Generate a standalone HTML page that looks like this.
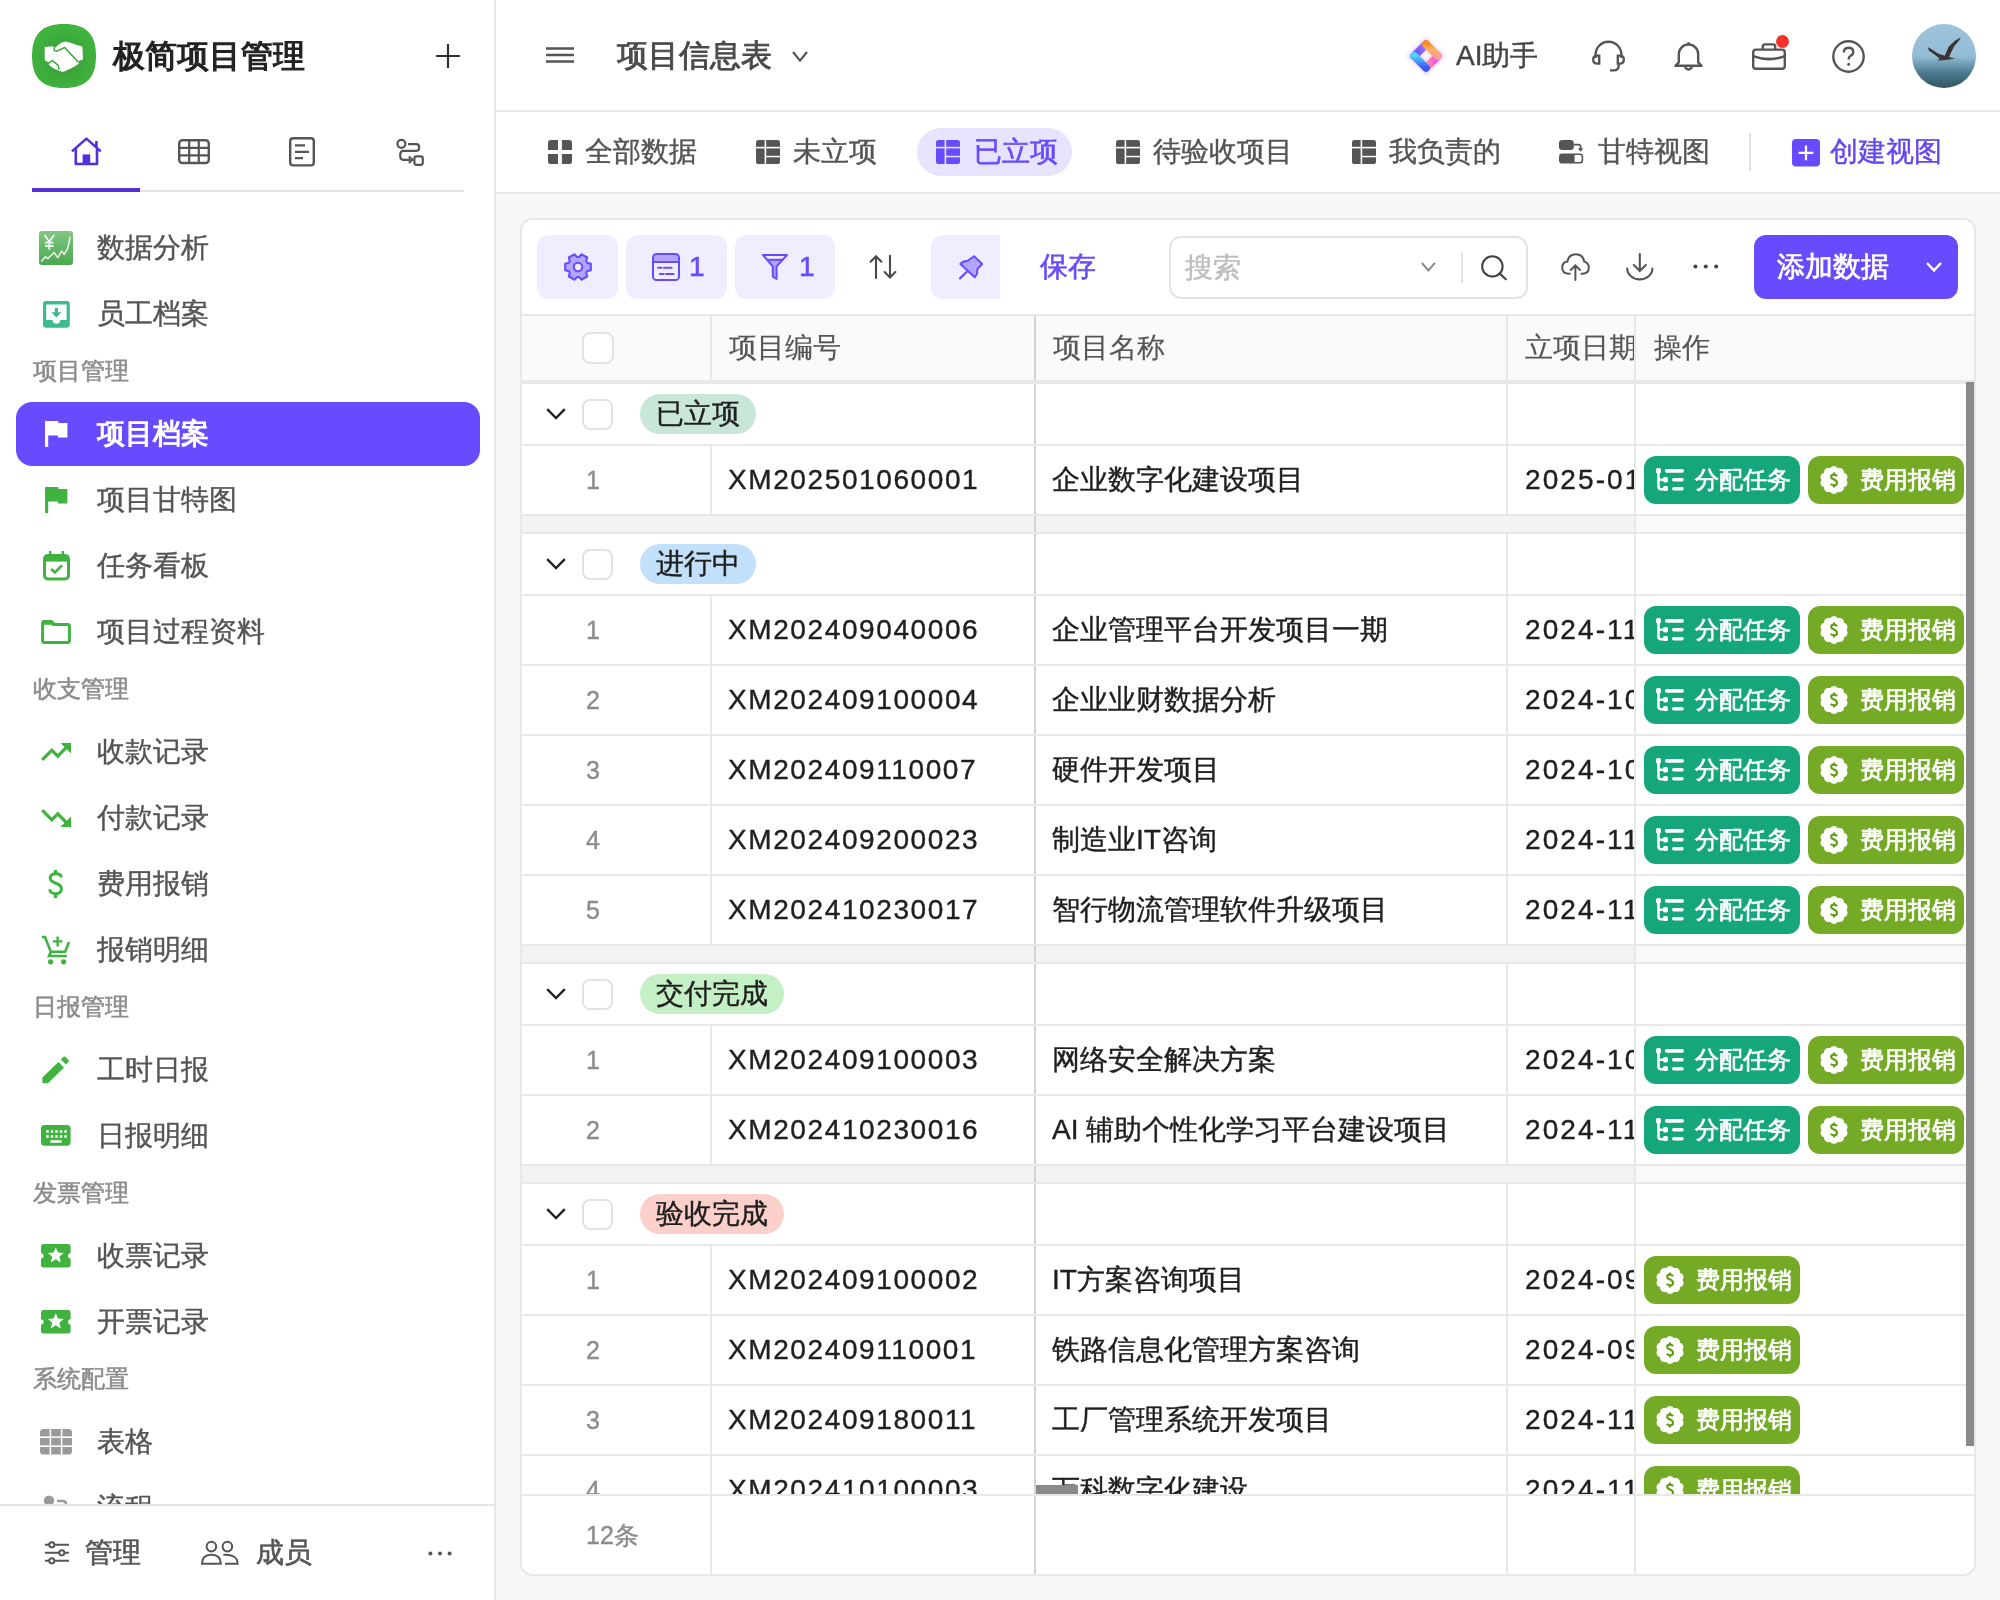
<!DOCTYPE html>
<html><head><meta charset="utf-8"><style>
*{box-sizing:border-box;margin:0;padding:0}
html,body{width:2000px;height:1600px;overflow:hidden;background:#fff}
body{font-family:"Liberation Sans",sans-serif;color:#1f1f1f;-webkit-text-stroke-width:0.2px}
#app{zoom:2;will-change:transform;width:1000px;height:800px;position:relative;overflow:hidden;background:#fff}
svg{display:block;position:absolute;overflow:visible}
.a{position:absolute}
.t{position:absolute;white-space:nowrap}
#side{position:absolute;left:0;top:0;width:248px;height:800px;background:#fff;border-right:1px solid #e8e8e8;overflow:hidden}
.si{position:absolute;left:48.5px;height:33px;line-height:33px;font-size:14px;color:#555;white-space:nowrap}
.sec{position:absolute;left:16.5px;height:20px;line-height:20px;font-size:12px;color:#8c8c8c;-webkit-text-stroke:0.28px #8c8c8c;white-space:nowrap}
#hdr{position:absolute;left:248px;top:0;width:752px;height:56px;border-bottom:1px solid #e8e8e8;background:#fff}
#tabs{position:absolute;left:248px;top:56px;width:752px;height:41px;border-bottom:1px solid #e8e8e8;background:#fff}
#content{position:absolute;left:248px;top:97px;width:752px;height:703px;background:#f7f8fa}
.tab{position:absolute;top:0;height:40px;line-height:40px;font-size:14px;color:#555;white-space:nowrap}
#card{position:absolute;left:260px;top:109px;width:728px;height:679px;background:#fff;border:1px solid #e8e8e8;border-radius:6px;overflow:hidden}
.tb{position:absolute;top:117.5px;height:32px;border-radius:6px;background:#efedff}
.cell{position:absolute;white-space:nowrap;overflow:hidden}
.hl{position:absolute;height:1px;background:#e8e8e8}
.vl{position:absolute;width:1px;background:#e8e8e8}
.code{font-size:14px;color:#1f1f1f;letter-spacing:0.8px}
.nm{font-size:14px;color:#1f1f1f}
.idx{font-size:12.5px;color:#8c8c8c;text-align:center}
.btn{position:absolute;height:24px;border-radius:6px;color:#fff;font-size:12px;line-height:24px;white-space:nowrap}
.tag{position:absolute;height:20px;border-radius:10px;font-size:14px;line-height:20px;color:#1f1f1f;text-align:center;white-space:nowrap}
.cb{position:absolute;width:16px;height:16px;border:1px solid #e2e2e2;border-radius:4px;background:#fff}
</style></head>
<body><div id="app">
<div id="side">
<svg style="left:16px;top:12px;width:32px;height:32px" viewBox="0 0 32 32" >
<defs><radialGradient id="lg" cx="50%" cy="55%" r="50%"><stop offset="0" stop-color="#379c37"/><stop offset="1" stop-color="#40b23e"/></radialGradient></defs>
<path d="M16 0C27 0 32 5 32 16S27 32 16 32 0 27 0 16 5 0 16 0Z" fill="url(#lg)"/>
<path d="M6.3 11.5 10.3 11.1 11.3 12 14.6 9.4 16.6 8.7 19.6 9.5 22.4 10.5 25.2 11.2 25.5 17.7 23.3 18.5 23.4 19.7 21.9 20.9 19.4 22.3 16.4 23.6 15.2 24 13.7 23.4 11.4 22.5 9.4 21.3 8.3 20.1 8.6 19.2 6.4 18.2Z" fill="#fff"/>
<g stroke="#3aa63a" stroke-width="0.75" fill="none" stroke-linecap="round">
<path d="M11.3 12.1Q10.5 13.5 12.2 13.6 14.5 12.8 16.3 11.7L22.9 18.8"/>
<path d="M8.7 19.4 10.2 18.2 13.1 20.7 13.5 22.6"/>
</g>
</svg>
<div class="t" style="left:56.5px;top:12px;height:32px;line-height:32px;font-size:16px;color:#222;-webkit-text-stroke:0.6px #222">极简项目管理</div>
<svg style="left:218px;top:22px;width:12px;height:12px" viewBox="0 0 12 12" ><path d="M6 0V12M0 6H12" stroke="#333" stroke-width="1.1"/></svg>
<svg style="left:34.75px;top:68.7px;width:16.4px;height:14.5px" viewBox="0 0 16.4 14.5" ><path d="M1 7.2 8.2 0.8 15.4 7.2M13.2 5.3V2M2.9 5.7V13.5H13.5V5.7" stroke="#5330d8" stroke-width="1.3" fill="none" stroke-linejoin="round"/>
<rect x="6.3" y="8.7" width="3.8" height="5" fill="#5330d8"/></svg>
<svg style="left:89px;top:69.7px;width:16px;height:12.6px" viewBox="0 0 16 12.6" ><rect x="0.6" y="0.6" width="14.8" height="11.4" rx="1.6" stroke="#555" stroke-width="1.2" fill="none"/>
<path d="M0.6 4.4H15.4M0.6 8.2H15.4M5.6 0.6V12M10.4 0.6V12" stroke="#555" stroke-width="1.1"/></svg>
<svg style="left:144.5px;top:68.4px;width:13px;height:14.8px" viewBox="0 0 13 14.8" ><rect x="0.6" y="0.6" width="11.8" height="13.6" rx="1.4" stroke="#555" stroke-width="1.2" fill="none"/>
<path d="M3 4.2H8M3 7.4H10M3 10.6H7" stroke="#555" stroke-width="1.1"/></svg>
<svg style="left:198px;top:69px;width:14px;height:14px" viewBox="0 0 14 14" ><circle cx="2.7" cy="2.9" r="2" stroke="#555" stroke-width="1.1" fill="none"/>
<rect x="9.2" y="9.2" width="4.2" height="4.2" rx="1" stroke="#555" stroke-width="1.1" fill="none"/>
<path d="M6 3.1H10.3C12 3.1 12 6.4 10.3 6.4H3.6C1.6 6.4 1.6 10.9 3.6 10.9H7.2" stroke="#555" stroke-width="1.1" fill="none"/>
<path d="M6.4 9.3 8.2 10.9 6.4 12.5" stroke="#555" stroke-width="1.1" fill="none"/></svg>
<div class="a" style="left:16px;top:94px;width:54px;height:2px;background:#5330d8"></div>
<div class="a" style="left:70px;top:95px;width:162px;height:1px;background:#e6e6e6"></div>
<svg style="left:19.5px;top:115.5px;width:17px;height:17px" viewBox="0 0 17 17" ><defs><linearGradient id="cg" x1="0" y1="0" x2="0" y2="1"><stop offset="0" stop-color="#80c783"/><stop offset="1" stop-color="#4aa84e"/></linearGradient></defs>
<rect x="0" y="0" width="17" height="17" rx="1.5" fill="url(#cg)"/>
<path d="M2.7 1.9 5.15 5.4 7.6 1.9M5.15 5.4V9.4M3 5.8H7.3M3 7.5H7.3" stroke="#f4f1f1" stroke-width="0.9" fill="none"/>
<path d="M1.1 15.2 3.2 12.9 4.5 13.8 7.5 10.7 9.4 13.3 11.3 10 12.6 11.7 14.3 8.8 15.6 2.8" stroke="#f4f1f1" stroke-width="0.75" fill="none" stroke-linejoin="round"/></svg>
<div class="si" style="top:107.5px;">数据分析</div>
<svg style="left:21.3px;top:150.3px;width:13.4px;height:13.4px" viewBox="0 0 13.4 13.4" ><rect x="0" y="0" width="13.4" height="13.4" rx="1.6" fill="#3dbb8f"/>
<path d="M1.6 1.7H11.8V9.5H8.6A1.9 1.9 0 0 1 4.8 9.5H1.6Z" fill="#fff"/>
<path d="M5.9 3.5H7.5V5.6H9.2L6.7 8.2 4.2 5.6H5.9Z" fill="#3dbb8f"/></svg>
<div class="si" style="top:140.5px;">员工档案</div>
<div class="sec" style="top:175.5px">项目管理</div>
<div class="a" style="left:8px;top:201px;width:232px;height:32px;border-radius:8px;background:#684bff"></div>
<svg style="left:22.4px;top:210.4px;width:11.2px;height:13px" viewBox="0 0 11.2 13" ><path d="M0 0H6.7V1H11.2V8.2H6.5V7.2H1.6V13H0Z" fill="#fff"/></svg>
<div class="si" style="top:200.5px;color:#fff;-webkit-text-stroke:0.55px #fff">项目档案</div>
<svg style="left:22.4px;top:243.4px;width:11.2px;height:13px" viewBox="0 0 11.2 13" ><path d="M0 0H6.7V1H11.2V8.2H6.5V7.2H1.6V13H0Z" fill="#3fb23f"/></svg>
<div class="si" style="top:233.5px;">项目甘特图</div>
<svg style="left:21.25px;top:275.5px;width:13.5px;height:14.8px" viewBox="0 0 13.5 14.8" ><rect x="0.75" y="2.3" width="12" height="11.7" rx="1.6" stroke="#3fb23f" stroke-width="1.5" fill="none"/>
<rect x="0.75" y="2.3" width="12" height="3" fill="#3fb23f"/>
<path d="M3.6 0V2.5M9.9 0V2.5" stroke="#3fb23f" stroke-width="1.2"/>
<path d="M4.1 9 5.9 10.7 9.5 7.2" stroke="#3fb23f" stroke-width="1.3" fill="none"/></svg>
<div class="si" style="top:266.5px;">任务看板</div>
<svg style="left:20.5px;top:310px;width:15px;height:12px" viewBox="0 0 15 12" ><path d="M0.8 10.6V1.6Q0.8 0.8 1.6 0.8H5.2L6.6 2.2H13.4Q14.2 2.2 14.2 3V10.4Q14.2 11.2 13.4 11.2H1.6Q0.8 11.2 0.8 10.4Z" stroke="#3fb23f" stroke-width="1.5" fill="none"/>
<path d="M0.8 1.6H5.5L6.6 2.6" stroke="#3fb23f" stroke-width="1.5" fill="none"/></svg>
<div class="si" style="top:299.5px;">项目过程资料</div>
<div class="sec" style="top:334.5px">收支管理</div>
<svg style="left:20.6px;top:371.4px;width:15px;height:9px" viewBox="0 0 15 9" ><path d="M0.6 8.4 5.4 3.6 8.4 6.6 12.8 2.1" stroke="#3fb23f" stroke-width="1.6" fill="none"/>
<path d="M9.7 0H15V5.3Z" fill="#3fb23f"/></svg>
<div class="si" style="top:359.5px;">收款记录</div>
<svg style="left:20.6px;top:404.7px;width:15px;height:9px" viewBox="0 0 15 9" ><path d="M0.6 0.6 5.4 5.4 8.4 2.4 12.8 6.9" stroke="#3fb23f" stroke-width="1.6" fill="none"/>
<path d="M9.7 9H15V3.7Z" fill="#3fb23f"/></svg>
<div class="si" style="top:392.5px;">付款记录</div>
<svg style="left:24.2px;top:435px;width:7.6px;height:14px" viewBox="0 0 7.6 14" ><path d="M6.6 3.7C6.6 2.4 5.3 1.9 3.9 1.9 2.4 1.9 1.1 2.6 1.1 4 1.1 7.2 6.7 5.8 6.7 9.5 6.7 11.1 5.4 11.9 3.8 11.9 2.2 11.9 0.9 11.1 0.9 9.6" stroke="#3fb23f" stroke-width="1.5" fill="none"/>
<path d="M3.8 0V2.2M3.8 11.6V14" stroke="#3fb23f" stroke-width="1.6"/></svg>
<div class="si" style="top:425.5px;">费用报销</div>
<svg style="left:20.9px;top:467.5px;width:14px;height:15px" viewBox="0 0 14 15" ><path d="M0 1H1.5L4.4 8.4H11.6L13.5 3.5" stroke="#3fb23f" stroke-width="1.3" fill="none"/>
<path d="M4.5 8.4 3.5 10.5H12.4" stroke="#3fb23f" stroke-width="1.3" fill="none"/>
<path d="M7.8 0.7V5.8M5.4 3.2H10.2" stroke="#3fb23f" stroke-width="1.2"/>
<circle cx="4.3" cy="13.4" r="1.3" fill="#3fb23f"/><circle cx="10.8" cy="13.4" r="1.3" fill="#3fb23f"/></svg>
<div class="si" style="top:458.5px;">报销明细</div>
<div class="sec" style="top:493.5px">日报管理</div>
<svg style="left:21.2px;top:528.1px;width:13.7px;height:13.8px" viewBox="0 0 13.7 13.8" ><path d="M0.2 10.8 8.2 3 11 5.7 3 13.6H0.2Z" fill="#3fb23f"/>
<path d="M9.4 1.8 10.7 0.5Q11.2 0 11.7 0.5L13.2 2Q13.7 2.5 13.2 3L12 4.3Z" fill="#3fb23f"/></svg>
<div class="si" style="top:518.5px;">工时日报</div>
<svg style="left:20.6px;top:562.7px;width:14.8px;height:10.4px" viewBox="0 0 14.8 10.4" ><rect x="0" y="0" width="14.8" height="10.4" rx="1.8" fill="#3fb23f"/><rect x="2.60" y="2.6" width="1.25" height="1.3" fill="#fff"/><rect x="2.60" y="5.1" width="1.25" height="1.3" fill="#fff"/><rect x="4.86" y="2.6" width="1.25" height="1.3" fill="#fff"/><rect x="4.86" y="5.1" width="1.25" height="1.3" fill="#fff"/><rect x="7.12" y="2.6" width="1.25" height="1.3" fill="#fff"/><rect x="7.12" y="5.1" width="1.25" height="1.3" fill="#fff"/><rect x="9.38" y="2.6" width="1.25" height="1.3" fill="#fff"/><rect x="9.38" y="5.1" width="1.25" height="1.3" fill="#fff"/><rect x="11.64" y="2.6" width="1.25" height="1.3" fill="#fff"/><rect x="11.64" y="5.1" width="1.25" height="1.3" fill="#fff"/><rect x="4.7" y="7.6" width="5.6" height="1.3" fill="#fff"/></svg>
<div class="si" style="top:551.5px;">日报明细</div>
<div class="sec" style="top:586.5px">发票管理</div>
<svg style="left:20.6px;top:622.1px;width:14.8px;height:11.8px" viewBox="0 0 14.8 11.8" ><path d="M1.2 0H13.6Q14.8 0 14.8 1.2V4.6A1.3 1.3 0 0 0 14.8 7.2V10.6Q14.8 11.8 13.6 11.8H1.2Q0 11.8 0 10.6V7.2A1.3 1.3 0 0 0 0 4.6V1.2Q0 0 1.2 0Z" fill="#3fb23f"/>
<path d="M7.4 1.6 8.5 4.3 11.4 4.5 9.2 6.3 9.9 9.2 7.4 7.6 4.9 9.2 5.6 6.3 3.4 4.5 6.3 4.3Z" fill="#fff"/></svg>
<div class="si" style="top:611.5px;">收票记录</div>
<svg style="left:20.6px;top:655.1px;width:14.8px;height:11.8px" viewBox="0 0 14.8 11.8" ><path d="M1.2 0H13.6Q14.8 0 14.8 1.2V4.6A1.3 1.3 0 0 0 14.8 7.2V10.6Q14.8 11.8 13.6 11.8H1.2Q0 11.8 0 10.6V7.2A1.3 1.3 0 0 0 0 4.6V1.2Q0 0 1.2 0Z" fill="#3fb23f"/>
<path d="M7.4 1.6 8.5 4.3 11.4 4.5 9.2 6.3 9.9 9.2 7.4 7.6 4.9 9.2 5.6 6.3 3.4 4.5 6.3 4.3Z" fill="#fff"/></svg>
<div class="si" style="top:644.5px;">开票记录</div>
<div class="sec" style="top:679.5px">系统配置</div>
<svg style="left:20px;top:714.6px;width:16px;height:12.8px" viewBox="0 0 16 12.8" ><rect x="0" y="0" width="16" height="12.8" rx="1.8" fill="#9a9a9a"/><rect x="4.8" y="-1" width="0.8" height="15" fill="#fff"/><rect x="10.4" y="-1" width="0.8" height="15" fill="#fff"/><rect x="-1" y="3.7" width="18" height="0.8" fill="#fff"/><rect x="-1" y="8.2" width="18" height="0.8" fill="#fff"/></svg>
<div class="si" style="top:704.5px;">表格</div>
<svg style="left:21px;top:747px;width:14px;height:14px" viewBox="0 0 14 14" ><circle cx="3.5" cy="3.3" r="2.6" fill="#9a9a9a"/><path d="M7.5 3.5H10.5Q12 3.5 12 5V6" stroke="#9a9a9a" stroke-width="1.2" fill="none"/></svg>
<div class="si" style="top:737.5px;">流程</div>
<div class="a" style="left:0;top:752px;width:247px;height:48px;background:#fff;border-top:1px solid #e6e6e6"></div>
<svg style="left:22.3px;top:770.5px;width:12px;height:11.8px" viewBox="0 0 12 11.8" ><g stroke="#555" stroke-width="1" fill="none">
<path d="M0 1.9H12M0 5.9H12M0 9.9H12"/>
<circle cx="3.4" cy="1.9" r="1.3" fill="#fff"/><circle cx="8.4" cy="5.9" r="1.3" fill="#fff"/><circle cx="3.4" cy="9.9" r="1.3" fill="#fff"/></g></svg>
<div class="t" style="left:42.5px;top:760px;height:33px;line-height:33px;font-size:14px;color:#555;-webkit-text-stroke:0.3px #555">管理</div>
<svg style="left:100.4px;top:770.5px;width:19px;height:11.8px" viewBox="0 0 19 11.8" ><g stroke="#555" stroke-width="1" fill="none">
<circle cx="5.2" cy="2.8" r="2.4"/><path d="M0.5 11.4Q0.5 6.9 5.2 6.9 9.9 6.9 9.9 11.4Z"/>
<circle cx="13.2" cy="2.8" r="2.4"/><path d="M11.2 6.9Q18.3 6.6 18.3 11.4H12"/></g></svg>
<div class="t" style="left:128px;top:760px;height:33px;line-height:33px;font-size:14px;color:#555;-webkit-text-stroke:0.3px #555">成员</div>
<svg style="left:214px;top:775.5px;width:12px;height:3px" viewBox="0 0 12 3" ><circle cx="1.2" cy="1.3" r="1" fill="#555"/><circle cx="6" cy="1.3" r="1" fill="#555"/><circle cx="10.8" cy="1.3" r="1" fill="#555"/></svg>
</div>
<div id="hdr"></div>
<svg style="left:273px;top:23.7px;width:14px;height:8px" viewBox="0 0 14 8" ><path d="M0 0.8H14M0 4.05H14M0 7.2H14" stroke="#555" stroke-width="1.25"/></svg>
<div class="t" style="left:308.5px;top:12px;height:32px;line-height:32px;font-size:15.6px;color:#4a4a4a;-webkit-text-stroke:0.45px #4a4a4a">项目信息表</div>
<svg style="left:396px;top:25.5px;width:8px;height:5.7px" viewBox="0 0 8 5.7" ><path d="M0.5 0.5 4 4.8 7.5 0.5" stroke="#555" stroke-width="1.1" fill="none"/></svg>
<svg style="left:704.5px;top:19.5px;width:17px;height:17px" viewBox="0 0 17 17" ><defs>
<linearGradient id="g1" x1="0" y1="1" x2="1" y2="0"><stop offset="0" stop-color="#5b4dff"/><stop offset="1" stop-color="#a678ff"/></linearGradient>
<linearGradient id="g2" x1="0" y1="0" x2="0" y2="1"><stop offset="0" stop-color="#ff8a1a"/><stop offset="0.4" stop-color="#ffb35a"/><stop offset="1" stop-color="#ffa08e"/></linearGradient>
<linearGradient id="g3" x1="1" y1="0" x2="0" y2="0"><stop offset="0" stop-color="#f540f0"/><stop offset="1" stop-color="#ff9e95"/></linearGradient>
<linearGradient id="g4" x1="0" y1="0" x2="0" y2="1"><stop offset="0" stop-color="#52d2f5"/><stop offset="1" stop-color="#3556ff"/></linearGradient>
<filter id="bl" x="-50%" y="-50%" width="200%" height="200%"><feGaussianBlur stdDeviation="0.9"/></filter>
</defs>
<g fill="none" stroke-width="3.9" stroke-linecap="round">
<path d="M8.5 8.5m-6 0l6-6 6 6-6 6Z" stroke="#d9c0ff" stroke-width="5.5" opacity="0.55" filter="url(#bl)"/>
<path d="M2.6 8.5 8.5 2.6" stroke="url(#g1)"/>
<path d="M14.4 8.5 8.5 14.4" stroke="url(#g3)"/>
<path d="M8.5 2.6 14.4 8.5" stroke="url(#g2)"/>
<path d="M8.5 14.4 2.6 8.5" stroke="url(#g4)"/>
</g></svg>
<div class="t" style="left:728px;top:12px;height:32px;line-height:32px;font-size:14px;color:#444">AI助手</div>
<svg style="left:796px;top:20px;width:16.5px;height:16px" viewBox="0 0 16.5 16" ><g stroke="#555" stroke-width="1.2" fill="none">
<path d="M1.8 9V7.3A6.45 6.45 0 0 1 14.7 7.3V9"/>
<path d="M3.6 7.8H2.6Q0.6 7.8 0.6 9.7 0.6 11.8 2.6 11.8H3.6Z"/>
<path d="M12.9 7.8H13.9Q15.9 7.8 15.9 9.7 15.9 11.8 13.9 11.8H12.9Z"/>
<path d="M13.4 11.8V12.6Q13.4 15.2 10.8 15.2H9"/></g></svg>
<svg style="left:837px;top:20.7px;width:14.5px;height:14.6px" viewBox="0 0 14.5 14.6" ><g stroke="#555" stroke-width="1.2" fill="none" stroke-linejoin="round">
<path d="M2.4 10.7V6.6A4.85 4.85 0 0 1 12.1 6.6V10.7L13.8 12.4H0.7Z"/>
<path d="M7.25 1.8V0.6"/><path d="M5.6 12.6A1.65 1.65 0 0 0 8.9 12.6"/></g></svg>
<svg style="left:876px;top:21.5px;width:17px;height:13.5px" viewBox="0 0 17 13.5" ><g stroke="#555" stroke-width="1.2" fill="none">
<rect x="0.6" y="3.3" width="15.8" height="9.6" rx="1.4"/>
<path d="M5.4 3.3V1.8Q5.4 0.7 6.5 0.7H10.5Q11.6 0.7 11.6 1.8V3.3"/>
<path d="M0.6 6.6Q8.5 9.6 16.4 6.6"/></g><rect x="7.4" y="7.3" width="2.2" height="1.2" fill="#555"/></svg>
<div class="a" style="left:887.8px;top:17.5px;width:6.6px;height:6.6px;border-radius:50%;background:#f5312a"></div>
<svg style="left:916px;top:20px;width:16.5px;height:16.5px" viewBox="0 0 16.5 16.5" ><circle cx="8.25" cy="8.25" r="7.6" stroke="#555" stroke-width="1.2" fill="none"/>
<path d="M5.9 6.3Q5.9 3.9 8.3 3.9 10.6 3.9 10.6 6 10.6 7.2 9.3 7.9 8.3 8.5 8.3 9.8" stroke="#555" stroke-width="1.2" fill="none"/>
<circle cx="8.3" cy="12.1" r="0.75" fill="#555"/></svg>
<svg style="left:956px;top:12px;width:32px;height:32px" viewBox="0 0 32 32" ><defs><linearGradient id="av" x1="0" y1="0" x2="0" y2="1"><stop offset="0" stop-color="#9fc3db"/><stop offset="0.5" stop-color="#93bdd6"/><stop offset="0.75" stop-color="#4f7d93"/><stop offset="1" stop-color="#2d5462"/></linearGradient></defs>
<circle cx="16" cy="16" r="16" fill="url(#av)"/>
<path d="M8 11.6 8.6 11.9 13.2 14.9 16.4 15.9 18.3 11.4 21.6 8.2 24.3 6.8 23.6 8.2 21.1 11.1 19 15.4 18.6 16.6 21.5 17.3 19.5 17.6 15.8 18.1 12.8 18.3 13.8 17.3 11.2 15.3 8.4 13.2Z" fill="#3b3532"/></svg>
<div id="tabs"></div>
<div class="a" style="left:458.3px;top:64px;width:77.6px;height:24px;border-radius:12px;background:#e8e4ff"></div>
<svg style="left:274px;top:70px;width:12px;height:12px" viewBox="0 0 12 12" ><rect x="0" y="0" width="12" height="12" rx="1.4" fill="#555"/><rect x="5" y="-1" width="1.95" height="14" fill="#fff"/><rect x="-1" y="5" width="14" height="2" fill="#fff"/></svg>
<div class="tab" style="left:292.5px;top:56px">全部数据</div>
<svg style="left:378px;top:70px;width:12px;height:12px" viewBox="0 0 12 12" ><rect x="0" y="0" width="12" height="12" rx="1.3" fill="#555"/><rect x="4.3" y="-1" width="0.8" height="14" fill="#fff"/><rect x="-1" y="3.4" width="14" height="0.8" fill="#fff"/><rect x="5" y="7.9" width="8" height="0.75" fill="#fff"/></svg>
<div class="tab" style="left:396.5px;top:56px">未立项</div>
<svg style="left:468px;top:70px;width:12px;height:12px" viewBox="0 0 12 12" ><rect x="0" y="0" width="12" height="12" rx="1.3" fill="#684bff"/><rect x="4.3" y="-1" width="0.8" height="14" fill="#e8e4ff"/><rect x="-1" y="3.4" width="14" height="0.8" fill="#e8e4ff"/><rect x="5" y="7.9" width="8" height="0.75" fill="#e8e4ff"/></svg>
<div class="tab" style="left:487px;top:56px;color:#684bff;-webkit-text-stroke:0.3px #684bff">已立项</div>
<svg style="left:558px;top:70px;width:12px;height:12px" viewBox="0 0 12 12" ><rect x="0" y="0" width="12" height="12" rx="1.3" fill="#555"/><rect x="4.3" y="-1" width="0.8" height="14" fill="#fff"/><rect x="-1" y="3.4" width="14" height="0.8" fill="#fff"/><rect x="5" y="7.9" width="8" height="0.75" fill="#fff"/></svg>
<div class="tab" style="left:576.5px;top:56px">待验收项目</div>
<svg style="left:676px;top:70px;width:12px;height:12px" viewBox="0 0 12 12" ><rect x="0" y="0" width="12" height="12" rx="1.3" fill="#555"/><rect x="4.3" y="-1" width="0.8" height="14" fill="#fff"/><rect x="-1" y="3.4" width="14" height="0.8" fill="#fff"/><rect x="5" y="7.9" width="8" height="0.75" fill="#fff"/></svg>
<div class="tab" style="left:694.5px;top:56px">我负责的</div>
<svg style="left:779.6px;top:70px;width:12.5px;height:12px" viewBox="0 0 12.5 12" ><rect x="0" y="0" width="7.4" height="5" rx="1.6" fill="#555"/>
<path d="M7.4 2.3H9.8Q10.8 2.3 10.8 3.3V4.5" stroke="#555" stroke-width="0.8" fill="none"/><path d="M9.9 4.1 10.8 5.2 11.7 4.1" stroke="#555" stroke-width="0.8" fill="none"/>
<path d="M1.6 6.7H10.4Q12.1 6.7 12.1 8.4V10.1Q12.1 11.8 10.4 11.8H1.6Q0 11.8 0 10.1V8.4Q0 6.7 1.6 6.7Z" fill="#555"/>
<path d="M7.8 7.5H10.4Q11.3 7.5 11.3 8.4V10.1Q11.3 11 10.4 11H7.8Z" fill="#fff"/></svg>
<div class="tab" style="left:799px;top:56px">甘特视图</div>
<div class="a" style="left:874.5px;top:66.5px;width:1px;height:19px;background:#e3e3e3"></div>
<svg style="left:896px;top:69.4px;width:14px;height:13.8px" viewBox="0 0 14 13.8" ><rect x="0" y="0" width="14" height="13.8" rx="2" fill="#684bff"/><path d="M7 3.2V10.6M3.3 6.9H10.7" stroke="#fff" stroke-width="1.1"/></svg>
<div class="tab" style="left:915px;top:56px;color:#6446f0">创建视图</div>
<div id="content"></div>
<div id="card"></div>
<div class="tb" style="left:268.7px;width:40.3px"></div>
<svg style="left:282px;top:126.5px;width:14px;height:14px" viewBox="0 0 14 14" ><path d="M7.42 2.02 8.83 0.66 11.57 2.24 11.11 4.15 11.52 4.87 13.41 5.42 13.41 8.58 11.52 9.13 11.11 9.85 11.57 11.76 8.83 13.34 7.42 11.98 6.58 11.98 5.17 13.34 2.43 11.76 2.89 9.85 2.48 9.13 0.59 8.58 0.59 5.42 2.48 4.87 2.89 4.15 2.43 2.24 5.17 0.66 6.58 2.02Z" fill="#b3a5ff" stroke="#684bff" stroke-width="1.05" stroke-linejoin="round"/>
<circle cx="7" cy="7" r="2.1" fill="#f1efff" stroke="#684bff" stroke-width="1.05"/></svg>
<div class="tb" style="left:313px;width:50.4px"></div>
<svg style="left:326px;top:126.5px;width:14px;height:14px" viewBox="0 0 14 14" ><path d="M0.5 4.5V2.3Q0.5 0.5 2.3 0.5H11.7Q13.5 0.5 13.5 2.3V4.5Z" fill="#b3a5ff"/>
<rect x="0.5" y="0.5" width="13" height="13" rx="1.8" stroke="#684bff" stroke-width="1" fill="none"/>
<path d="M0.5 4.5H13.5" stroke="#684bff" stroke-width="1"/><path d="M3 7.4H4.8M6 7.4H9.8M3.9 10.5H5.8M7 10.5H10.8" stroke="#684bff" stroke-width="1" stroke-linecap="round"/></svg>
<div class="t" style="left:344.5px;top:117.5px;height:32px;line-height:32px;font-size:14px;color:#684bff;-webkit-text-stroke:0.3px #684bff">1</div>
<div class="tb" style="left:367.5px;width:50px"></div>
<svg style="left:381px;top:127px;width:13px;height:13px" viewBox="0 0 13 13" ><path d="M2.6 2.9H10.4L7.3 6.2V12.4L5.4 11.1V6.2Z" fill="#b3a5ff"/>
<path d="M0.5 0.5H12.5L7.3 6.2V12.5L5.4 11.3V6.2Z" stroke="#684bff" stroke-width="1" fill="none" stroke-linejoin="round"/>
<path d="M2.7 2.9H10.3" stroke="#684bff" stroke-width="1"/></svg>
<div class="t" style="left:399.5px;top:117.5px;height:32px;line-height:32px;font-size:14px;color:#684bff;-webkit-text-stroke:0.3px #684bff">1</div>
<svg style="left:435px;top:127.5px;width:13px;height:11.8px" viewBox="0 0 13 11.8" ><path d="M3 11.5V0.6M0.3 3.4 3 0.6 5.7 3.4M10 0.4V11.2M7.3 8.5 10 11.2 12.7 8.5" stroke="#4a4a4a" stroke-width="1.05" fill="none" stroke-linecap="round"/></svg>
<div class="tb" style="left:465.6px;width:34.4px;border-radius:6px 0 0 6px"></div>
<svg style="left:479px;top:126.8px;width:13.2px;height:13.4px" viewBox="0 0 13.2 13.4" ><path d="M8.05 1.1 12.1 5 9.8 7.4Q9.4 8.6 9.6 9.8L8.4 11.6 1.2 4.95Q2.6 3.4 4.7 3.5Z" fill="#b3a5ff" stroke="#684bff" stroke-width="1" stroke-linejoin="round"/>
<path d="M4.4 8.9 1 12.2" stroke="#684bff" stroke-width="1.1" stroke-linecap="round"/></svg>
<div class="t" style="left:520px;top:117.5px;height:32px;line-height:32px;font-size:14px;color:#684bff;-webkit-text-stroke:0.3px #684bff">保存</div>
<div class="a" style="left:584.5px;top:118px;width:179.5px;height:31.5px;border:1px solid #e4e4e4;border-radius:6px;background:#fff"></div>
<div class="t" style="left:592.5px;top:118px;height:31.5px;line-height:31.5px;font-size:14px;color:#bdbdbd">搜索</div>
<svg style="left:710.6px;top:131px;width:7.4px;height:4.8px" viewBox="0 0 7.4 4.8" ><path d="M0.4 0.4 3.7 4.2 7 0.4" stroke="#888" stroke-width="1" fill="none"/></svg>
<div class="a" style="left:730.5px;top:125.8px;width:1px;height:15.5px;background:#e4e4e4"></div>
<svg style="left:740.7px;top:127.3px;width:12.8px;height:12.4px" viewBox="0 0 12.8 12.4" ><circle cx="5.7" cy="5.7" r="5.1" stroke="#444" stroke-width="1.05" fill="none"/><path d="M9.4 9.3 12.4 12.1" stroke="#444" stroke-width="1.1" stroke-linecap="round"/></svg>
<svg style="left:780.7px;top:126.5px;width:14.4px;height:13.6px" viewBox="0 0 14.4 13.6" ><g stroke="#555" stroke-width="1" fill="none" stroke-linecap="round">
<path d="M4.4 10.4H3.6Q0.6 10.2 0.6 7.3 0.7 4.6 3.2 4.3 3.9 0.6 7.4 0.6 11 0.6 11.6 4.3 13.9 4.8 13.9 7.4 13.8 10.2 11 10.4H10.2"/>
<path d="M7.2 13.5V6.3M4.9 8.5 7.2 6.2 9.5 8.5"/></g></svg>
<svg style="left:813px;top:126.5px;width:13.8px;height:13.6px" viewBox="0 0 13.8 13.6" ><g stroke="#555" stroke-width="1.05" fill="none" stroke-linecap="round">
<path d="M6.9 0.5V9M3.9 6 6.9 9 9.9 6"/><path d="M0.6 7.8A6.3 5.4 0 0 0 13.2 7.8"/></g></svg>
<svg style="left:846.6px;top:131.8px;width:12.8px;height:2.6px" viewBox="0 0 12.8 2.6" ><circle cx="1.2" cy="1.3" r="1" fill="#444"/><circle cx="6.4" cy="1.3" r="1" fill="#444"/><circle cx="11.6" cy="1.3" r="1" fill="#444"/></svg>
<div class="a" style="left:877px;top:117.3px;width:102px;height:32px;border-radius:6px;background:#684bff"></div>
<div class="t" style="left:888.5px;top:117.3px;height:32px;line-height:32px;font-size:14px;color:#fff;-webkit-text-stroke:0.35px #fff">添加数据</div>
<svg style="left:962.8px;top:131px;width:8px;height:4.8px" viewBox="0 0 8 4.8" ><path d="M0.5 0.5 4 4.2 7.5 0.5" stroke="#fff" stroke-width="1.2" fill="none"/></svg>
<div class="a" style="left:261px;top:157px;width:726px;height:33px;background:#fafafa;border-top:1px solid #e8e8e8"></div>
<div class="a" style="left:261px;top:190px;width:726px;height:2px;background:#e8e8e8"></div>
<div class="vl" style="left:355px;top:158px;height:32px;background:#e8e8e8"></div>
<div class="vl" style="left:517px;top:158px;height:32px;background:#d3d3d3"></div>
<div class="vl" style="left:753px;top:158px;height:32px;background:#e8e8e8"></div>
<div class="vl" style="left:817px;top:158px;height:32px;background:#e8e8e8"></div>
<div class="cb" style="left:291px;top:166px"></div>
<div class="t" style="left:364.5px;top:158px;height:32px;line-height:32px;font-size:14px;color:#555;-webkit-text-stroke-width:0.08px">项目编号</div>
<div class="t" style="left:526.5px;top:158px;height:32px;line-height:32px;font-size:14px;color:#555;-webkit-text-stroke-width:0.08px">项目名称</div>
<div class="t" style="left:826.8px;top:158px;height:32px;line-height:32px;font-size:14px;color:#555;-webkit-text-stroke-width:0.08px">操作</div>
<div class="a" style="left:753px;top:158px;width:64px;height:32px;overflow:hidden"><div class="t" style="left:9.4px;top:0;height:32px;line-height:32px;font-size:14px;color:#555;-webkit-text-stroke-width:0.08px">立项日期</div></div>
<div class="a" style="left:261px;top:192px;width:726px;height:555px;overflow:hidden">
<div class="a" style="left:-261px;top:-192px;width:1000px;height:800px">
<svg style="left:273px;top:204px;width:10px;height:6px" viewBox="0 0 10 6"><path d="M0.6 0.6 5 5 9.4 0.6" stroke="#222" stroke-width="1.2" fill="none"/></svg>
<div class="cb" style="left:291px;top:199.3px;width:15.5px;height:15.5px"></div>
<div class="tag" style="left:320px;top:197px;width:58px;background:#c9e7d9">已立项</div>
<div class="vl" style="left:517px;top:192px;height:30px;background:#d3d3d3"></div>
<div class="vl" style="left:753px;top:192px;height:30px;background:#e8e8e8"></div>
<div class="vl" style="left:817px;top:192px;height:30px;background:#e8e8e8"></div>
<div class="hl" style="left:261px;top:222px;width:726px"></div>
<div class="cell idx" style="left:293px;top:223px;width:10px;height:34px;line-height:34px;text-align:left">1</div>
<div class="cell code" style="left:364px;top:223px;height:34px;line-height:34px">XM202501060001</div>
<div class="cell nm" style="left:526px;top:223px;height:34px;line-height:34px">企业数字化建设项目</div>
<div class="cell code" style="left:754px;top:223px;width:63px;height:34px;line-height:34px;padding-left:8.5px;letter-spacing:1.05px">2025-01</div>
<div class="btn" style="left:822px;top:228px;width:78px;background:#16a67b"></div>
<svg style="left:828px;top:234.15px;width:14px;height:11.5px" viewBox="0 0 14 11.5"><g fill="#fff"><rect x="0" y="0" width="2.5" height="2.7" rx="0.8"/><rect x="3.5" y="4.5" width="2.5" height="2.7" rx="0.8"/><rect x="3.5" y="9" width="2.5" height="2.5" rx="0.8"/><rect x="4.4" y="0.55" width="9.6" height="1.8" rx="0.9"/><rect x="8" y="4.95" width="5.9" height="1.8" rx="0.9"/><rect x="8" y="9.45" width="5.9" height="1.8" rx="0.9"/></g><path d="M1.25 2.4V9.4Q1.25 10.6 2.45 10.6H3.8M1.25 5.85H3.8" stroke="#fff" stroke-width="1.3" fill="none"/></svg>
<div class="t" style="left:847.7px;top:228px;height:24px;line-height:24px;font-size:11.8px;color:#fff;-webkit-text-stroke:0.35px #fff">分配任务</div>
<div class="btn" style="left:904px;top:228px;width:78px;background:#74aa25"></div>
<svg style="left:910px;top:233px;width:14px;height:14px" viewBox="0 0 14 14"><path d="M7.00 0.05 7.27 0.07 7.54 0.11 7.81 0.19 8.06 0.30 8.30 0.45 8.53 0.63 8.73 0.85 8.87 1.25 9.21 1.01 9.51 0.94 9.80 0.93 10.08 0.96 10.35 1.02 10.61 1.11 10.86 1.23 11.09 1.38 11.30 1.55 11.49 1.75 11.65 1.97 11.79 2.21 11.91 2.46 11.99 2.74 12.02 3.05 11.89 3.44 12.31 3.45 12.59 3.57 12.83 3.73 13.04 3.92 13.23 4.13 13.38 4.36 13.51 4.60 13.61 4.85 13.68 5.12 13.72 5.39 13.72 5.66 13.70 5.94 13.64 6.21 13.54 6.49 13.38 6.75 13.05 7.00 13.38 7.25 13.54 7.51 13.64 7.79 13.70 8.06 13.72 8.34 13.72 8.61 13.68 8.88 13.61 9.15 13.51 9.40 13.38 9.64 13.23 9.87 13.04 10.08 12.83 10.27 12.59 10.43 12.31 10.55 11.89 10.56 12.02 10.95 11.99 11.26 11.91 11.54 11.79 11.79 11.65 12.03 11.49 12.25 11.30 12.45 11.09 12.62 10.86 12.77 10.61 12.89 10.35 12.98 10.08 13.04 9.80 13.07 9.51 13.06 9.21 12.99 8.87 12.75 8.73 13.15 8.53 13.37 8.30 13.55 8.06 13.70 7.81 13.81 7.54 13.89 7.27 13.93 7.00 13.95 6.73 13.93 6.46 13.89 6.19 13.81 5.94 13.70 5.70 13.55 5.47 13.37 5.27 13.15 5.13 12.75 4.79 12.99 4.49 13.06 4.20 13.07 3.92 13.04 3.65 12.98 3.39 12.89 3.14 12.77 2.91 12.62 2.70 12.45 2.51 12.25 2.35 12.03 2.21 11.79 2.09 11.54 2.01 11.26 1.98 10.95 2.11 10.56 1.69 10.55 1.41 10.43 1.17 10.27 0.96 10.08 0.77 9.87 0.62 9.64 0.49 9.40 0.39 9.15 0.32 8.88 0.28 8.61 0.28 8.34 0.30 8.06 0.36 7.79 0.46 7.51 0.62 7.25 0.95 7.00 0.62 6.75 0.46 6.49 0.36 6.21 0.30 5.94 0.28 5.66 0.28 5.39 0.32 5.12 0.39 4.85 0.49 4.60 0.62 4.36 0.77 4.13 0.96 3.92 1.17 3.73 1.41 3.57 1.69 3.45 2.11 3.44 1.98 3.05 2.01 2.74 2.09 2.46 2.21 2.21 2.35 1.97 2.51 1.75 2.70 1.55 2.91 1.38 3.14 1.23 3.39 1.11 3.65 1.02 3.92 0.96 4.20 0.93 4.49 0.94 4.79 1.01 5.13 1.25 5.27 0.85 5.47 0.63 5.70 0.45 5.94 0.30 6.19 0.19 6.46 0.11 6.73 0.07Z" fill="#fff"/><path d="M8.5 5.1Q8 4.3 7 4.3 5.6 4.3 5.6 5.4 5.6 6.3 7 6.8 8.5 7.3 8.5 8.5 8.5 9.7 7 9.7 5.9 9.7 5.4 8.9M7 3.3V4.3M7 9.7V10.7" stroke="#5f9e12" stroke-width="1.05" fill="none"/></svg>
<div class="t" style="left:930px;top:228px;height:24px;line-height:24px;font-size:11.8px;color:#fff;-webkit-text-stroke:0.35px #fff">费用报销</div>
<div class="vl" style="left:355px;top:223px;height:34px"></div>
<div class="vl" style="left:517px;top:223px;height:34px;background:#d3d3d3"></div>
<div class="vl" style="left:753px;top:223px;height:34px;background:#e8e8e8"></div>
<div class="vl" style="left:817px;top:223px;height:34px;background:#e8e8e8"></div>
<div class="hl" style="left:261px;top:257px;width:726px"></div>
<div class="a" style="left:261px;top:258px;width:556px;height:8px;background:#f3f3f3"></div>
<div class="a" style="left:817px;top:258px;width:170px;height:8px;background:#f9f9f9"></div>
<div class="vl" style="left:517px;top:258px;height:8px;background:#d3d3d3"></div>
<div class="vl" style="left:817px;top:258px;height:8px"></div>
<div class="hl" style="left:261px;top:266px;width:726px"></div>
<svg style="left:273px;top:279px;width:10px;height:6px" viewBox="0 0 10 6"><path d="M0.6 0.6 5 5 9.4 0.6" stroke="#222" stroke-width="1.2" fill="none"/></svg>
<div class="cb" style="left:291px;top:274.3px;width:15.5px;height:15.5px"></div>
<div class="tag" style="left:320px;top:272px;width:58px;background:#c3e0fb">进行中</div>
<div class="vl" style="left:517px;top:267px;height:30px;background:#d3d3d3"></div>
<div class="vl" style="left:753px;top:267px;height:30px;background:#e8e8e8"></div>
<div class="vl" style="left:817px;top:267px;height:30px;background:#e8e8e8"></div>
<div class="hl" style="left:261px;top:297px;width:726px"></div>
<div class="cell idx" style="left:293px;top:298px;width:10px;height:34px;line-height:34px;text-align:left">1</div>
<div class="cell code" style="left:364px;top:298px;height:34px;line-height:34px">XM202409040006</div>
<div class="cell nm" style="left:526px;top:298px;height:34px;line-height:34px">企业管理平台开发项目一期</div>
<div class="cell code" style="left:754px;top:298px;width:63px;height:34px;line-height:34px;padding-left:8.5px;letter-spacing:1.05px">2024-11</div>
<div class="btn" style="left:822px;top:303px;width:78px;background:#16a67b"></div>
<svg style="left:828px;top:309.15px;width:14px;height:11.5px" viewBox="0 0 14 11.5"><g fill="#fff"><rect x="0" y="0" width="2.5" height="2.7" rx="0.8"/><rect x="3.5" y="4.5" width="2.5" height="2.7" rx="0.8"/><rect x="3.5" y="9" width="2.5" height="2.5" rx="0.8"/><rect x="4.4" y="0.55" width="9.6" height="1.8" rx="0.9"/><rect x="8" y="4.95" width="5.9" height="1.8" rx="0.9"/><rect x="8" y="9.45" width="5.9" height="1.8" rx="0.9"/></g><path d="M1.25 2.4V9.4Q1.25 10.6 2.45 10.6H3.8M1.25 5.85H3.8" stroke="#fff" stroke-width="1.3" fill="none"/></svg>
<div class="t" style="left:847.7px;top:303px;height:24px;line-height:24px;font-size:11.8px;color:#fff;-webkit-text-stroke:0.35px #fff">分配任务</div>
<div class="btn" style="left:904px;top:303px;width:78px;background:#74aa25"></div>
<svg style="left:910px;top:308px;width:14px;height:14px" viewBox="0 0 14 14"><path d="M7.00 0.05 7.27 0.07 7.54 0.11 7.81 0.19 8.06 0.30 8.30 0.45 8.53 0.63 8.73 0.85 8.87 1.25 9.21 1.01 9.51 0.94 9.80 0.93 10.08 0.96 10.35 1.02 10.61 1.11 10.86 1.23 11.09 1.38 11.30 1.55 11.49 1.75 11.65 1.97 11.79 2.21 11.91 2.46 11.99 2.74 12.02 3.05 11.89 3.44 12.31 3.45 12.59 3.57 12.83 3.73 13.04 3.92 13.23 4.13 13.38 4.36 13.51 4.60 13.61 4.85 13.68 5.12 13.72 5.39 13.72 5.66 13.70 5.94 13.64 6.21 13.54 6.49 13.38 6.75 13.05 7.00 13.38 7.25 13.54 7.51 13.64 7.79 13.70 8.06 13.72 8.34 13.72 8.61 13.68 8.88 13.61 9.15 13.51 9.40 13.38 9.64 13.23 9.87 13.04 10.08 12.83 10.27 12.59 10.43 12.31 10.55 11.89 10.56 12.02 10.95 11.99 11.26 11.91 11.54 11.79 11.79 11.65 12.03 11.49 12.25 11.30 12.45 11.09 12.62 10.86 12.77 10.61 12.89 10.35 12.98 10.08 13.04 9.80 13.07 9.51 13.06 9.21 12.99 8.87 12.75 8.73 13.15 8.53 13.37 8.30 13.55 8.06 13.70 7.81 13.81 7.54 13.89 7.27 13.93 7.00 13.95 6.73 13.93 6.46 13.89 6.19 13.81 5.94 13.70 5.70 13.55 5.47 13.37 5.27 13.15 5.13 12.75 4.79 12.99 4.49 13.06 4.20 13.07 3.92 13.04 3.65 12.98 3.39 12.89 3.14 12.77 2.91 12.62 2.70 12.45 2.51 12.25 2.35 12.03 2.21 11.79 2.09 11.54 2.01 11.26 1.98 10.95 2.11 10.56 1.69 10.55 1.41 10.43 1.17 10.27 0.96 10.08 0.77 9.87 0.62 9.64 0.49 9.40 0.39 9.15 0.32 8.88 0.28 8.61 0.28 8.34 0.30 8.06 0.36 7.79 0.46 7.51 0.62 7.25 0.95 7.00 0.62 6.75 0.46 6.49 0.36 6.21 0.30 5.94 0.28 5.66 0.28 5.39 0.32 5.12 0.39 4.85 0.49 4.60 0.62 4.36 0.77 4.13 0.96 3.92 1.17 3.73 1.41 3.57 1.69 3.45 2.11 3.44 1.98 3.05 2.01 2.74 2.09 2.46 2.21 2.21 2.35 1.97 2.51 1.75 2.70 1.55 2.91 1.38 3.14 1.23 3.39 1.11 3.65 1.02 3.92 0.96 4.20 0.93 4.49 0.94 4.79 1.01 5.13 1.25 5.27 0.85 5.47 0.63 5.70 0.45 5.94 0.30 6.19 0.19 6.46 0.11 6.73 0.07Z" fill="#fff"/><path d="M8.5 5.1Q8 4.3 7 4.3 5.6 4.3 5.6 5.4 5.6 6.3 7 6.8 8.5 7.3 8.5 8.5 8.5 9.7 7 9.7 5.9 9.7 5.4 8.9M7 3.3V4.3M7 9.7V10.7" stroke="#5f9e12" stroke-width="1.05" fill="none"/></svg>
<div class="t" style="left:930px;top:303px;height:24px;line-height:24px;font-size:11.8px;color:#fff;-webkit-text-stroke:0.35px #fff">费用报销</div>
<div class="vl" style="left:355px;top:298px;height:34px"></div>
<div class="vl" style="left:517px;top:298px;height:34px;background:#d3d3d3"></div>
<div class="vl" style="left:753px;top:298px;height:34px;background:#e8e8e8"></div>
<div class="vl" style="left:817px;top:298px;height:34px;background:#e8e8e8"></div>
<div class="hl" style="left:261px;top:332px;width:726px"></div>
<div class="cell idx" style="left:293px;top:333px;width:10px;height:34px;line-height:34px;text-align:left">2</div>
<div class="cell code" style="left:364px;top:333px;height:34px;line-height:34px">XM202409100004</div>
<div class="cell nm" style="left:526px;top:333px;height:34px;line-height:34px">企业业财数据分析</div>
<div class="cell code" style="left:754px;top:333px;width:63px;height:34px;line-height:34px;padding-left:8.5px;letter-spacing:1.05px">2024-10</div>
<div class="btn" style="left:822px;top:338px;width:78px;background:#16a67b"></div>
<svg style="left:828px;top:344.15px;width:14px;height:11.5px" viewBox="0 0 14 11.5"><g fill="#fff"><rect x="0" y="0" width="2.5" height="2.7" rx="0.8"/><rect x="3.5" y="4.5" width="2.5" height="2.7" rx="0.8"/><rect x="3.5" y="9" width="2.5" height="2.5" rx="0.8"/><rect x="4.4" y="0.55" width="9.6" height="1.8" rx="0.9"/><rect x="8" y="4.95" width="5.9" height="1.8" rx="0.9"/><rect x="8" y="9.45" width="5.9" height="1.8" rx="0.9"/></g><path d="M1.25 2.4V9.4Q1.25 10.6 2.45 10.6H3.8M1.25 5.85H3.8" stroke="#fff" stroke-width="1.3" fill="none"/></svg>
<div class="t" style="left:847.7px;top:338px;height:24px;line-height:24px;font-size:11.8px;color:#fff;-webkit-text-stroke:0.35px #fff">分配任务</div>
<div class="btn" style="left:904px;top:338px;width:78px;background:#74aa25"></div>
<svg style="left:910px;top:343px;width:14px;height:14px" viewBox="0 0 14 14"><path d="M7.00 0.05 7.27 0.07 7.54 0.11 7.81 0.19 8.06 0.30 8.30 0.45 8.53 0.63 8.73 0.85 8.87 1.25 9.21 1.01 9.51 0.94 9.80 0.93 10.08 0.96 10.35 1.02 10.61 1.11 10.86 1.23 11.09 1.38 11.30 1.55 11.49 1.75 11.65 1.97 11.79 2.21 11.91 2.46 11.99 2.74 12.02 3.05 11.89 3.44 12.31 3.45 12.59 3.57 12.83 3.73 13.04 3.92 13.23 4.13 13.38 4.36 13.51 4.60 13.61 4.85 13.68 5.12 13.72 5.39 13.72 5.66 13.70 5.94 13.64 6.21 13.54 6.49 13.38 6.75 13.05 7.00 13.38 7.25 13.54 7.51 13.64 7.79 13.70 8.06 13.72 8.34 13.72 8.61 13.68 8.88 13.61 9.15 13.51 9.40 13.38 9.64 13.23 9.87 13.04 10.08 12.83 10.27 12.59 10.43 12.31 10.55 11.89 10.56 12.02 10.95 11.99 11.26 11.91 11.54 11.79 11.79 11.65 12.03 11.49 12.25 11.30 12.45 11.09 12.62 10.86 12.77 10.61 12.89 10.35 12.98 10.08 13.04 9.80 13.07 9.51 13.06 9.21 12.99 8.87 12.75 8.73 13.15 8.53 13.37 8.30 13.55 8.06 13.70 7.81 13.81 7.54 13.89 7.27 13.93 7.00 13.95 6.73 13.93 6.46 13.89 6.19 13.81 5.94 13.70 5.70 13.55 5.47 13.37 5.27 13.15 5.13 12.75 4.79 12.99 4.49 13.06 4.20 13.07 3.92 13.04 3.65 12.98 3.39 12.89 3.14 12.77 2.91 12.62 2.70 12.45 2.51 12.25 2.35 12.03 2.21 11.79 2.09 11.54 2.01 11.26 1.98 10.95 2.11 10.56 1.69 10.55 1.41 10.43 1.17 10.27 0.96 10.08 0.77 9.87 0.62 9.64 0.49 9.40 0.39 9.15 0.32 8.88 0.28 8.61 0.28 8.34 0.30 8.06 0.36 7.79 0.46 7.51 0.62 7.25 0.95 7.00 0.62 6.75 0.46 6.49 0.36 6.21 0.30 5.94 0.28 5.66 0.28 5.39 0.32 5.12 0.39 4.85 0.49 4.60 0.62 4.36 0.77 4.13 0.96 3.92 1.17 3.73 1.41 3.57 1.69 3.45 2.11 3.44 1.98 3.05 2.01 2.74 2.09 2.46 2.21 2.21 2.35 1.97 2.51 1.75 2.70 1.55 2.91 1.38 3.14 1.23 3.39 1.11 3.65 1.02 3.92 0.96 4.20 0.93 4.49 0.94 4.79 1.01 5.13 1.25 5.27 0.85 5.47 0.63 5.70 0.45 5.94 0.30 6.19 0.19 6.46 0.11 6.73 0.07Z" fill="#fff"/><path d="M8.5 5.1Q8 4.3 7 4.3 5.6 4.3 5.6 5.4 5.6 6.3 7 6.8 8.5 7.3 8.5 8.5 8.5 9.7 7 9.7 5.9 9.7 5.4 8.9M7 3.3V4.3M7 9.7V10.7" stroke="#5f9e12" stroke-width="1.05" fill="none"/></svg>
<div class="t" style="left:930px;top:338px;height:24px;line-height:24px;font-size:11.8px;color:#fff;-webkit-text-stroke:0.35px #fff">费用报销</div>
<div class="vl" style="left:355px;top:333px;height:34px"></div>
<div class="vl" style="left:517px;top:333px;height:34px;background:#d3d3d3"></div>
<div class="vl" style="left:753px;top:333px;height:34px;background:#e8e8e8"></div>
<div class="vl" style="left:817px;top:333px;height:34px;background:#e8e8e8"></div>
<div class="hl" style="left:261px;top:367px;width:726px"></div>
<div class="cell idx" style="left:293px;top:368px;width:10px;height:34px;line-height:34px;text-align:left">3</div>
<div class="cell code" style="left:364px;top:368px;height:34px;line-height:34px">XM202409110007</div>
<div class="cell nm" style="left:526px;top:368px;height:34px;line-height:34px">硬件开发项目</div>
<div class="cell code" style="left:754px;top:368px;width:63px;height:34px;line-height:34px;padding-left:8.5px;letter-spacing:1.05px">2024-10</div>
<div class="btn" style="left:822px;top:373px;width:78px;background:#16a67b"></div>
<svg style="left:828px;top:379.15px;width:14px;height:11.5px" viewBox="0 0 14 11.5"><g fill="#fff"><rect x="0" y="0" width="2.5" height="2.7" rx="0.8"/><rect x="3.5" y="4.5" width="2.5" height="2.7" rx="0.8"/><rect x="3.5" y="9" width="2.5" height="2.5" rx="0.8"/><rect x="4.4" y="0.55" width="9.6" height="1.8" rx="0.9"/><rect x="8" y="4.95" width="5.9" height="1.8" rx="0.9"/><rect x="8" y="9.45" width="5.9" height="1.8" rx="0.9"/></g><path d="M1.25 2.4V9.4Q1.25 10.6 2.45 10.6H3.8M1.25 5.85H3.8" stroke="#fff" stroke-width="1.3" fill="none"/></svg>
<div class="t" style="left:847.7px;top:373px;height:24px;line-height:24px;font-size:11.8px;color:#fff;-webkit-text-stroke:0.35px #fff">分配任务</div>
<div class="btn" style="left:904px;top:373px;width:78px;background:#74aa25"></div>
<svg style="left:910px;top:378px;width:14px;height:14px" viewBox="0 0 14 14"><path d="M7.00 0.05 7.27 0.07 7.54 0.11 7.81 0.19 8.06 0.30 8.30 0.45 8.53 0.63 8.73 0.85 8.87 1.25 9.21 1.01 9.51 0.94 9.80 0.93 10.08 0.96 10.35 1.02 10.61 1.11 10.86 1.23 11.09 1.38 11.30 1.55 11.49 1.75 11.65 1.97 11.79 2.21 11.91 2.46 11.99 2.74 12.02 3.05 11.89 3.44 12.31 3.45 12.59 3.57 12.83 3.73 13.04 3.92 13.23 4.13 13.38 4.36 13.51 4.60 13.61 4.85 13.68 5.12 13.72 5.39 13.72 5.66 13.70 5.94 13.64 6.21 13.54 6.49 13.38 6.75 13.05 7.00 13.38 7.25 13.54 7.51 13.64 7.79 13.70 8.06 13.72 8.34 13.72 8.61 13.68 8.88 13.61 9.15 13.51 9.40 13.38 9.64 13.23 9.87 13.04 10.08 12.83 10.27 12.59 10.43 12.31 10.55 11.89 10.56 12.02 10.95 11.99 11.26 11.91 11.54 11.79 11.79 11.65 12.03 11.49 12.25 11.30 12.45 11.09 12.62 10.86 12.77 10.61 12.89 10.35 12.98 10.08 13.04 9.80 13.07 9.51 13.06 9.21 12.99 8.87 12.75 8.73 13.15 8.53 13.37 8.30 13.55 8.06 13.70 7.81 13.81 7.54 13.89 7.27 13.93 7.00 13.95 6.73 13.93 6.46 13.89 6.19 13.81 5.94 13.70 5.70 13.55 5.47 13.37 5.27 13.15 5.13 12.75 4.79 12.99 4.49 13.06 4.20 13.07 3.92 13.04 3.65 12.98 3.39 12.89 3.14 12.77 2.91 12.62 2.70 12.45 2.51 12.25 2.35 12.03 2.21 11.79 2.09 11.54 2.01 11.26 1.98 10.95 2.11 10.56 1.69 10.55 1.41 10.43 1.17 10.27 0.96 10.08 0.77 9.87 0.62 9.64 0.49 9.40 0.39 9.15 0.32 8.88 0.28 8.61 0.28 8.34 0.30 8.06 0.36 7.79 0.46 7.51 0.62 7.25 0.95 7.00 0.62 6.75 0.46 6.49 0.36 6.21 0.30 5.94 0.28 5.66 0.28 5.39 0.32 5.12 0.39 4.85 0.49 4.60 0.62 4.36 0.77 4.13 0.96 3.92 1.17 3.73 1.41 3.57 1.69 3.45 2.11 3.44 1.98 3.05 2.01 2.74 2.09 2.46 2.21 2.21 2.35 1.97 2.51 1.75 2.70 1.55 2.91 1.38 3.14 1.23 3.39 1.11 3.65 1.02 3.92 0.96 4.20 0.93 4.49 0.94 4.79 1.01 5.13 1.25 5.27 0.85 5.47 0.63 5.70 0.45 5.94 0.30 6.19 0.19 6.46 0.11 6.73 0.07Z" fill="#fff"/><path d="M8.5 5.1Q8 4.3 7 4.3 5.6 4.3 5.6 5.4 5.6 6.3 7 6.8 8.5 7.3 8.5 8.5 8.5 9.7 7 9.7 5.9 9.7 5.4 8.9M7 3.3V4.3M7 9.7V10.7" stroke="#5f9e12" stroke-width="1.05" fill="none"/></svg>
<div class="t" style="left:930px;top:373px;height:24px;line-height:24px;font-size:11.8px;color:#fff;-webkit-text-stroke:0.35px #fff">费用报销</div>
<div class="vl" style="left:355px;top:368px;height:34px"></div>
<div class="vl" style="left:517px;top:368px;height:34px;background:#d3d3d3"></div>
<div class="vl" style="left:753px;top:368px;height:34px;background:#e8e8e8"></div>
<div class="vl" style="left:817px;top:368px;height:34px;background:#e8e8e8"></div>
<div class="hl" style="left:261px;top:402px;width:726px"></div>
<div class="cell idx" style="left:293px;top:403px;width:10px;height:34px;line-height:34px;text-align:left">4</div>
<div class="cell code" style="left:364px;top:403px;height:34px;line-height:34px">XM202409200023</div>
<div class="cell nm" style="left:526px;top:403px;height:34px;line-height:34px">制造业IT咨询</div>
<div class="cell code" style="left:754px;top:403px;width:63px;height:34px;line-height:34px;padding-left:8.5px;letter-spacing:1.05px">2024-11</div>
<div class="btn" style="left:822px;top:408px;width:78px;background:#16a67b"></div>
<svg style="left:828px;top:414.15px;width:14px;height:11.5px" viewBox="0 0 14 11.5"><g fill="#fff"><rect x="0" y="0" width="2.5" height="2.7" rx="0.8"/><rect x="3.5" y="4.5" width="2.5" height="2.7" rx="0.8"/><rect x="3.5" y="9" width="2.5" height="2.5" rx="0.8"/><rect x="4.4" y="0.55" width="9.6" height="1.8" rx="0.9"/><rect x="8" y="4.95" width="5.9" height="1.8" rx="0.9"/><rect x="8" y="9.45" width="5.9" height="1.8" rx="0.9"/></g><path d="M1.25 2.4V9.4Q1.25 10.6 2.45 10.6H3.8M1.25 5.85H3.8" stroke="#fff" stroke-width="1.3" fill="none"/></svg>
<div class="t" style="left:847.7px;top:408px;height:24px;line-height:24px;font-size:11.8px;color:#fff;-webkit-text-stroke:0.35px #fff">分配任务</div>
<div class="btn" style="left:904px;top:408px;width:78px;background:#74aa25"></div>
<svg style="left:910px;top:413px;width:14px;height:14px" viewBox="0 0 14 14"><path d="M7.00 0.05 7.27 0.07 7.54 0.11 7.81 0.19 8.06 0.30 8.30 0.45 8.53 0.63 8.73 0.85 8.87 1.25 9.21 1.01 9.51 0.94 9.80 0.93 10.08 0.96 10.35 1.02 10.61 1.11 10.86 1.23 11.09 1.38 11.30 1.55 11.49 1.75 11.65 1.97 11.79 2.21 11.91 2.46 11.99 2.74 12.02 3.05 11.89 3.44 12.31 3.45 12.59 3.57 12.83 3.73 13.04 3.92 13.23 4.13 13.38 4.36 13.51 4.60 13.61 4.85 13.68 5.12 13.72 5.39 13.72 5.66 13.70 5.94 13.64 6.21 13.54 6.49 13.38 6.75 13.05 7.00 13.38 7.25 13.54 7.51 13.64 7.79 13.70 8.06 13.72 8.34 13.72 8.61 13.68 8.88 13.61 9.15 13.51 9.40 13.38 9.64 13.23 9.87 13.04 10.08 12.83 10.27 12.59 10.43 12.31 10.55 11.89 10.56 12.02 10.95 11.99 11.26 11.91 11.54 11.79 11.79 11.65 12.03 11.49 12.25 11.30 12.45 11.09 12.62 10.86 12.77 10.61 12.89 10.35 12.98 10.08 13.04 9.80 13.07 9.51 13.06 9.21 12.99 8.87 12.75 8.73 13.15 8.53 13.37 8.30 13.55 8.06 13.70 7.81 13.81 7.54 13.89 7.27 13.93 7.00 13.95 6.73 13.93 6.46 13.89 6.19 13.81 5.94 13.70 5.70 13.55 5.47 13.37 5.27 13.15 5.13 12.75 4.79 12.99 4.49 13.06 4.20 13.07 3.92 13.04 3.65 12.98 3.39 12.89 3.14 12.77 2.91 12.62 2.70 12.45 2.51 12.25 2.35 12.03 2.21 11.79 2.09 11.54 2.01 11.26 1.98 10.95 2.11 10.56 1.69 10.55 1.41 10.43 1.17 10.27 0.96 10.08 0.77 9.87 0.62 9.64 0.49 9.40 0.39 9.15 0.32 8.88 0.28 8.61 0.28 8.34 0.30 8.06 0.36 7.79 0.46 7.51 0.62 7.25 0.95 7.00 0.62 6.75 0.46 6.49 0.36 6.21 0.30 5.94 0.28 5.66 0.28 5.39 0.32 5.12 0.39 4.85 0.49 4.60 0.62 4.36 0.77 4.13 0.96 3.92 1.17 3.73 1.41 3.57 1.69 3.45 2.11 3.44 1.98 3.05 2.01 2.74 2.09 2.46 2.21 2.21 2.35 1.97 2.51 1.75 2.70 1.55 2.91 1.38 3.14 1.23 3.39 1.11 3.65 1.02 3.92 0.96 4.20 0.93 4.49 0.94 4.79 1.01 5.13 1.25 5.27 0.85 5.47 0.63 5.70 0.45 5.94 0.30 6.19 0.19 6.46 0.11 6.73 0.07Z" fill="#fff"/><path d="M8.5 5.1Q8 4.3 7 4.3 5.6 4.3 5.6 5.4 5.6 6.3 7 6.8 8.5 7.3 8.5 8.5 8.5 9.7 7 9.7 5.9 9.7 5.4 8.9M7 3.3V4.3M7 9.7V10.7" stroke="#5f9e12" stroke-width="1.05" fill="none"/></svg>
<div class="t" style="left:930px;top:408px;height:24px;line-height:24px;font-size:11.8px;color:#fff;-webkit-text-stroke:0.35px #fff">费用报销</div>
<div class="vl" style="left:355px;top:403px;height:34px"></div>
<div class="vl" style="left:517px;top:403px;height:34px;background:#d3d3d3"></div>
<div class="vl" style="left:753px;top:403px;height:34px;background:#e8e8e8"></div>
<div class="vl" style="left:817px;top:403px;height:34px;background:#e8e8e8"></div>
<div class="hl" style="left:261px;top:437px;width:726px"></div>
<div class="cell idx" style="left:293px;top:438px;width:10px;height:34px;line-height:34px;text-align:left">5</div>
<div class="cell code" style="left:364px;top:438px;height:34px;line-height:34px">XM202410230017</div>
<div class="cell nm" style="left:526px;top:438px;height:34px;line-height:34px">智行物流管理软件升级项目</div>
<div class="cell code" style="left:754px;top:438px;width:63px;height:34px;line-height:34px;padding-left:8.5px;letter-spacing:1.05px">2024-11</div>
<div class="btn" style="left:822px;top:443px;width:78px;background:#16a67b"></div>
<svg style="left:828px;top:449.15px;width:14px;height:11.5px" viewBox="0 0 14 11.5"><g fill="#fff"><rect x="0" y="0" width="2.5" height="2.7" rx="0.8"/><rect x="3.5" y="4.5" width="2.5" height="2.7" rx="0.8"/><rect x="3.5" y="9" width="2.5" height="2.5" rx="0.8"/><rect x="4.4" y="0.55" width="9.6" height="1.8" rx="0.9"/><rect x="8" y="4.95" width="5.9" height="1.8" rx="0.9"/><rect x="8" y="9.45" width="5.9" height="1.8" rx="0.9"/></g><path d="M1.25 2.4V9.4Q1.25 10.6 2.45 10.6H3.8M1.25 5.85H3.8" stroke="#fff" stroke-width="1.3" fill="none"/></svg>
<div class="t" style="left:847.7px;top:443px;height:24px;line-height:24px;font-size:11.8px;color:#fff;-webkit-text-stroke:0.35px #fff">分配任务</div>
<div class="btn" style="left:904px;top:443px;width:78px;background:#74aa25"></div>
<svg style="left:910px;top:448px;width:14px;height:14px" viewBox="0 0 14 14"><path d="M7.00 0.05 7.27 0.07 7.54 0.11 7.81 0.19 8.06 0.30 8.30 0.45 8.53 0.63 8.73 0.85 8.87 1.25 9.21 1.01 9.51 0.94 9.80 0.93 10.08 0.96 10.35 1.02 10.61 1.11 10.86 1.23 11.09 1.38 11.30 1.55 11.49 1.75 11.65 1.97 11.79 2.21 11.91 2.46 11.99 2.74 12.02 3.05 11.89 3.44 12.31 3.45 12.59 3.57 12.83 3.73 13.04 3.92 13.23 4.13 13.38 4.36 13.51 4.60 13.61 4.85 13.68 5.12 13.72 5.39 13.72 5.66 13.70 5.94 13.64 6.21 13.54 6.49 13.38 6.75 13.05 7.00 13.38 7.25 13.54 7.51 13.64 7.79 13.70 8.06 13.72 8.34 13.72 8.61 13.68 8.88 13.61 9.15 13.51 9.40 13.38 9.64 13.23 9.87 13.04 10.08 12.83 10.27 12.59 10.43 12.31 10.55 11.89 10.56 12.02 10.95 11.99 11.26 11.91 11.54 11.79 11.79 11.65 12.03 11.49 12.25 11.30 12.45 11.09 12.62 10.86 12.77 10.61 12.89 10.35 12.98 10.08 13.04 9.80 13.07 9.51 13.06 9.21 12.99 8.87 12.75 8.73 13.15 8.53 13.37 8.30 13.55 8.06 13.70 7.81 13.81 7.54 13.89 7.27 13.93 7.00 13.95 6.73 13.93 6.46 13.89 6.19 13.81 5.94 13.70 5.70 13.55 5.47 13.37 5.27 13.15 5.13 12.75 4.79 12.99 4.49 13.06 4.20 13.07 3.92 13.04 3.65 12.98 3.39 12.89 3.14 12.77 2.91 12.62 2.70 12.45 2.51 12.25 2.35 12.03 2.21 11.79 2.09 11.54 2.01 11.26 1.98 10.95 2.11 10.56 1.69 10.55 1.41 10.43 1.17 10.27 0.96 10.08 0.77 9.87 0.62 9.64 0.49 9.40 0.39 9.15 0.32 8.88 0.28 8.61 0.28 8.34 0.30 8.06 0.36 7.79 0.46 7.51 0.62 7.25 0.95 7.00 0.62 6.75 0.46 6.49 0.36 6.21 0.30 5.94 0.28 5.66 0.28 5.39 0.32 5.12 0.39 4.85 0.49 4.60 0.62 4.36 0.77 4.13 0.96 3.92 1.17 3.73 1.41 3.57 1.69 3.45 2.11 3.44 1.98 3.05 2.01 2.74 2.09 2.46 2.21 2.21 2.35 1.97 2.51 1.75 2.70 1.55 2.91 1.38 3.14 1.23 3.39 1.11 3.65 1.02 3.92 0.96 4.20 0.93 4.49 0.94 4.79 1.01 5.13 1.25 5.27 0.85 5.47 0.63 5.70 0.45 5.94 0.30 6.19 0.19 6.46 0.11 6.73 0.07Z" fill="#fff"/><path d="M8.5 5.1Q8 4.3 7 4.3 5.6 4.3 5.6 5.4 5.6 6.3 7 6.8 8.5 7.3 8.5 8.5 8.5 9.7 7 9.7 5.9 9.7 5.4 8.9M7 3.3V4.3M7 9.7V10.7" stroke="#5f9e12" stroke-width="1.05" fill="none"/></svg>
<div class="t" style="left:930px;top:443px;height:24px;line-height:24px;font-size:11.8px;color:#fff;-webkit-text-stroke:0.35px #fff">费用报销</div>
<div class="vl" style="left:355px;top:438px;height:34px"></div>
<div class="vl" style="left:517px;top:438px;height:34px;background:#d3d3d3"></div>
<div class="vl" style="left:753px;top:438px;height:34px;background:#e8e8e8"></div>
<div class="vl" style="left:817px;top:438px;height:34px;background:#e8e8e8"></div>
<div class="hl" style="left:261px;top:472px;width:726px"></div>
<div class="a" style="left:261px;top:473px;width:556px;height:8px;background:#f3f3f3"></div>
<div class="a" style="left:817px;top:473px;width:170px;height:8px;background:#f9f9f9"></div>
<div class="vl" style="left:517px;top:473px;height:8px;background:#d3d3d3"></div>
<div class="vl" style="left:817px;top:473px;height:8px"></div>
<div class="hl" style="left:261px;top:481px;width:726px"></div>
<svg style="left:273px;top:494px;width:10px;height:6px" viewBox="0 0 10 6"><path d="M0.6 0.6 5 5 9.4 0.6" stroke="#222" stroke-width="1.2" fill="none"/></svg>
<div class="cb" style="left:291px;top:489.3px;width:15.5px;height:15.5px"></div>
<div class="tag" style="left:320px;top:487px;width:72px;background:#c5efc5">交付完成</div>
<div class="vl" style="left:517px;top:482px;height:30px;background:#d3d3d3"></div>
<div class="vl" style="left:753px;top:482px;height:30px;background:#e8e8e8"></div>
<div class="vl" style="left:817px;top:482px;height:30px;background:#e8e8e8"></div>
<div class="hl" style="left:261px;top:512px;width:726px"></div>
<div class="cell idx" style="left:293px;top:513px;width:10px;height:34px;line-height:34px;text-align:left">1</div>
<div class="cell code" style="left:364px;top:513px;height:34px;line-height:34px">XM202409100003</div>
<div class="cell nm" style="left:526px;top:513px;height:34px;line-height:34px">网络安全解决方案</div>
<div class="cell code" style="left:754px;top:513px;width:63px;height:34px;line-height:34px;padding-left:8.5px;letter-spacing:1.05px">2024-10</div>
<div class="btn" style="left:822px;top:518px;width:78px;background:#16a67b"></div>
<svg style="left:828px;top:524.15px;width:14px;height:11.5px" viewBox="0 0 14 11.5"><g fill="#fff"><rect x="0" y="0" width="2.5" height="2.7" rx="0.8"/><rect x="3.5" y="4.5" width="2.5" height="2.7" rx="0.8"/><rect x="3.5" y="9" width="2.5" height="2.5" rx="0.8"/><rect x="4.4" y="0.55" width="9.6" height="1.8" rx="0.9"/><rect x="8" y="4.95" width="5.9" height="1.8" rx="0.9"/><rect x="8" y="9.45" width="5.9" height="1.8" rx="0.9"/></g><path d="M1.25 2.4V9.4Q1.25 10.6 2.45 10.6H3.8M1.25 5.85H3.8" stroke="#fff" stroke-width="1.3" fill="none"/></svg>
<div class="t" style="left:847.7px;top:518px;height:24px;line-height:24px;font-size:11.8px;color:#fff;-webkit-text-stroke:0.35px #fff">分配任务</div>
<div class="btn" style="left:904px;top:518px;width:78px;background:#74aa25"></div>
<svg style="left:910px;top:523px;width:14px;height:14px" viewBox="0 0 14 14"><path d="M7.00 0.05 7.27 0.07 7.54 0.11 7.81 0.19 8.06 0.30 8.30 0.45 8.53 0.63 8.73 0.85 8.87 1.25 9.21 1.01 9.51 0.94 9.80 0.93 10.08 0.96 10.35 1.02 10.61 1.11 10.86 1.23 11.09 1.38 11.30 1.55 11.49 1.75 11.65 1.97 11.79 2.21 11.91 2.46 11.99 2.74 12.02 3.05 11.89 3.44 12.31 3.45 12.59 3.57 12.83 3.73 13.04 3.92 13.23 4.13 13.38 4.36 13.51 4.60 13.61 4.85 13.68 5.12 13.72 5.39 13.72 5.66 13.70 5.94 13.64 6.21 13.54 6.49 13.38 6.75 13.05 7.00 13.38 7.25 13.54 7.51 13.64 7.79 13.70 8.06 13.72 8.34 13.72 8.61 13.68 8.88 13.61 9.15 13.51 9.40 13.38 9.64 13.23 9.87 13.04 10.08 12.83 10.27 12.59 10.43 12.31 10.55 11.89 10.56 12.02 10.95 11.99 11.26 11.91 11.54 11.79 11.79 11.65 12.03 11.49 12.25 11.30 12.45 11.09 12.62 10.86 12.77 10.61 12.89 10.35 12.98 10.08 13.04 9.80 13.07 9.51 13.06 9.21 12.99 8.87 12.75 8.73 13.15 8.53 13.37 8.30 13.55 8.06 13.70 7.81 13.81 7.54 13.89 7.27 13.93 7.00 13.95 6.73 13.93 6.46 13.89 6.19 13.81 5.94 13.70 5.70 13.55 5.47 13.37 5.27 13.15 5.13 12.75 4.79 12.99 4.49 13.06 4.20 13.07 3.92 13.04 3.65 12.98 3.39 12.89 3.14 12.77 2.91 12.62 2.70 12.45 2.51 12.25 2.35 12.03 2.21 11.79 2.09 11.54 2.01 11.26 1.98 10.95 2.11 10.56 1.69 10.55 1.41 10.43 1.17 10.27 0.96 10.08 0.77 9.87 0.62 9.64 0.49 9.40 0.39 9.15 0.32 8.88 0.28 8.61 0.28 8.34 0.30 8.06 0.36 7.79 0.46 7.51 0.62 7.25 0.95 7.00 0.62 6.75 0.46 6.49 0.36 6.21 0.30 5.94 0.28 5.66 0.28 5.39 0.32 5.12 0.39 4.85 0.49 4.60 0.62 4.36 0.77 4.13 0.96 3.92 1.17 3.73 1.41 3.57 1.69 3.45 2.11 3.44 1.98 3.05 2.01 2.74 2.09 2.46 2.21 2.21 2.35 1.97 2.51 1.75 2.70 1.55 2.91 1.38 3.14 1.23 3.39 1.11 3.65 1.02 3.92 0.96 4.20 0.93 4.49 0.94 4.79 1.01 5.13 1.25 5.27 0.85 5.47 0.63 5.70 0.45 5.94 0.30 6.19 0.19 6.46 0.11 6.73 0.07Z" fill="#fff"/><path d="M8.5 5.1Q8 4.3 7 4.3 5.6 4.3 5.6 5.4 5.6 6.3 7 6.8 8.5 7.3 8.5 8.5 8.5 9.7 7 9.7 5.9 9.7 5.4 8.9M7 3.3V4.3M7 9.7V10.7" stroke="#5f9e12" stroke-width="1.05" fill="none"/></svg>
<div class="t" style="left:930px;top:518px;height:24px;line-height:24px;font-size:11.8px;color:#fff;-webkit-text-stroke:0.35px #fff">费用报销</div>
<div class="vl" style="left:355px;top:513px;height:34px"></div>
<div class="vl" style="left:517px;top:513px;height:34px;background:#d3d3d3"></div>
<div class="vl" style="left:753px;top:513px;height:34px;background:#e8e8e8"></div>
<div class="vl" style="left:817px;top:513px;height:34px;background:#e8e8e8"></div>
<div class="hl" style="left:261px;top:547px;width:726px"></div>
<div class="cell idx" style="left:293px;top:548px;width:10px;height:34px;line-height:34px;text-align:left">2</div>
<div class="cell code" style="left:364px;top:548px;height:34px;line-height:34px">XM202410230016</div>
<div class="cell nm" style="left:526px;top:548px;height:34px;line-height:34px">AI 辅助个性化学习平台建设项目</div>
<div class="cell code" style="left:754px;top:548px;width:63px;height:34px;line-height:34px;padding-left:8.5px;letter-spacing:1.05px">2024-11</div>
<div class="btn" style="left:822px;top:553px;width:78px;background:#16a67b"></div>
<svg style="left:828px;top:559.15px;width:14px;height:11.5px" viewBox="0 0 14 11.5"><g fill="#fff"><rect x="0" y="0" width="2.5" height="2.7" rx="0.8"/><rect x="3.5" y="4.5" width="2.5" height="2.7" rx="0.8"/><rect x="3.5" y="9" width="2.5" height="2.5" rx="0.8"/><rect x="4.4" y="0.55" width="9.6" height="1.8" rx="0.9"/><rect x="8" y="4.95" width="5.9" height="1.8" rx="0.9"/><rect x="8" y="9.45" width="5.9" height="1.8" rx="0.9"/></g><path d="M1.25 2.4V9.4Q1.25 10.6 2.45 10.6H3.8M1.25 5.85H3.8" stroke="#fff" stroke-width="1.3" fill="none"/></svg>
<div class="t" style="left:847.7px;top:553px;height:24px;line-height:24px;font-size:11.8px;color:#fff;-webkit-text-stroke:0.35px #fff">分配任务</div>
<div class="btn" style="left:904px;top:553px;width:78px;background:#74aa25"></div>
<svg style="left:910px;top:558px;width:14px;height:14px" viewBox="0 0 14 14"><path d="M7.00 0.05 7.27 0.07 7.54 0.11 7.81 0.19 8.06 0.30 8.30 0.45 8.53 0.63 8.73 0.85 8.87 1.25 9.21 1.01 9.51 0.94 9.80 0.93 10.08 0.96 10.35 1.02 10.61 1.11 10.86 1.23 11.09 1.38 11.30 1.55 11.49 1.75 11.65 1.97 11.79 2.21 11.91 2.46 11.99 2.74 12.02 3.05 11.89 3.44 12.31 3.45 12.59 3.57 12.83 3.73 13.04 3.92 13.23 4.13 13.38 4.36 13.51 4.60 13.61 4.85 13.68 5.12 13.72 5.39 13.72 5.66 13.70 5.94 13.64 6.21 13.54 6.49 13.38 6.75 13.05 7.00 13.38 7.25 13.54 7.51 13.64 7.79 13.70 8.06 13.72 8.34 13.72 8.61 13.68 8.88 13.61 9.15 13.51 9.40 13.38 9.64 13.23 9.87 13.04 10.08 12.83 10.27 12.59 10.43 12.31 10.55 11.89 10.56 12.02 10.95 11.99 11.26 11.91 11.54 11.79 11.79 11.65 12.03 11.49 12.25 11.30 12.45 11.09 12.62 10.86 12.77 10.61 12.89 10.35 12.98 10.08 13.04 9.80 13.07 9.51 13.06 9.21 12.99 8.87 12.75 8.73 13.15 8.53 13.37 8.30 13.55 8.06 13.70 7.81 13.81 7.54 13.89 7.27 13.93 7.00 13.95 6.73 13.93 6.46 13.89 6.19 13.81 5.94 13.70 5.70 13.55 5.47 13.37 5.27 13.15 5.13 12.75 4.79 12.99 4.49 13.06 4.20 13.07 3.92 13.04 3.65 12.98 3.39 12.89 3.14 12.77 2.91 12.62 2.70 12.45 2.51 12.25 2.35 12.03 2.21 11.79 2.09 11.54 2.01 11.26 1.98 10.95 2.11 10.56 1.69 10.55 1.41 10.43 1.17 10.27 0.96 10.08 0.77 9.87 0.62 9.64 0.49 9.40 0.39 9.15 0.32 8.88 0.28 8.61 0.28 8.34 0.30 8.06 0.36 7.79 0.46 7.51 0.62 7.25 0.95 7.00 0.62 6.75 0.46 6.49 0.36 6.21 0.30 5.94 0.28 5.66 0.28 5.39 0.32 5.12 0.39 4.85 0.49 4.60 0.62 4.36 0.77 4.13 0.96 3.92 1.17 3.73 1.41 3.57 1.69 3.45 2.11 3.44 1.98 3.05 2.01 2.74 2.09 2.46 2.21 2.21 2.35 1.97 2.51 1.75 2.70 1.55 2.91 1.38 3.14 1.23 3.39 1.11 3.65 1.02 3.92 0.96 4.20 0.93 4.49 0.94 4.79 1.01 5.13 1.25 5.27 0.85 5.47 0.63 5.70 0.45 5.94 0.30 6.19 0.19 6.46 0.11 6.73 0.07Z" fill="#fff"/><path d="M8.5 5.1Q8 4.3 7 4.3 5.6 4.3 5.6 5.4 5.6 6.3 7 6.8 8.5 7.3 8.5 8.5 8.5 9.7 7 9.7 5.9 9.7 5.4 8.9M7 3.3V4.3M7 9.7V10.7" stroke="#5f9e12" stroke-width="1.05" fill="none"/></svg>
<div class="t" style="left:930px;top:553px;height:24px;line-height:24px;font-size:11.8px;color:#fff;-webkit-text-stroke:0.35px #fff">费用报销</div>
<div class="vl" style="left:355px;top:548px;height:34px"></div>
<div class="vl" style="left:517px;top:548px;height:34px;background:#d3d3d3"></div>
<div class="vl" style="left:753px;top:548px;height:34px;background:#e8e8e8"></div>
<div class="vl" style="left:817px;top:548px;height:34px;background:#e8e8e8"></div>
<div class="hl" style="left:261px;top:582px;width:726px"></div>
<div class="a" style="left:261px;top:583px;width:556px;height:8px;background:#f3f3f3"></div>
<div class="a" style="left:817px;top:583px;width:170px;height:8px;background:#f9f9f9"></div>
<div class="vl" style="left:517px;top:583px;height:8px;background:#d3d3d3"></div>
<div class="vl" style="left:817px;top:583px;height:8px"></div>
<div class="hl" style="left:261px;top:591px;width:726px"></div>
<svg style="left:273px;top:604px;width:10px;height:6px" viewBox="0 0 10 6"><path d="M0.6 0.6 5 5 9.4 0.6" stroke="#222" stroke-width="1.2" fill="none"/></svg>
<div class="cb" style="left:291px;top:599.3px;width:15.5px;height:15.5px"></div>
<div class="tag" style="left:320px;top:597px;width:72px;background:#fbd0ca">验收完成</div>
<div class="vl" style="left:517px;top:592px;height:30px;background:#d3d3d3"></div>
<div class="vl" style="left:753px;top:592px;height:30px;background:#e8e8e8"></div>
<div class="vl" style="left:817px;top:592px;height:30px;background:#e8e8e8"></div>
<div class="hl" style="left:261px;top:622px;width:726px"></div>
<div class="cell idx" style="left:293px;top:623px;width:10px;height:34px;line-height:34px;text-align:left">1</div>
<div class="cell code" style="left:364px;top:623px;height:34px;line-height:34px">XM202409100002</div>
<div class="cell nm" style="left:526px;top:623px;height:34px;line-height:34px">IT方案咨询项目</div>
<div class="cell code" style="left:754px;top:623px;width:63px;height:34px;line-height:34px;padding-left:8.5px;letter-spacing:1.05px">2024-09</div>
<div class="btn" style="left:822px;top:628px;width:78px;background:#74aa25"></div>
<svg style="left:828px;top:633px;width:14px;height:14px" viewBox="0 0 14 14"><path d="M7.00 0.05 7.27 0.07 7.54 0.11 7.81 0.19 8.06 0.30 8.30 0.45 8.53 0.63 8.73 0.85 8.87 1.25 9.21 1.01 9.51 0.94 9.80 0.93 10.08 0.96 10.35 1.02 10.61 1.11 10.86 1.23 11.09 1.38 11.30 1.55 11.49 1.75 11.65 1.97 11.79 2.21 11.91 2.46 11.99 2.74 12.02 3.05 11.89 3.44 12.31 3.45 12.59 3.57 12.83 3.73 13.04 3.92 13.23 4.13 13.38 4.36 13.51 4.60 13.61 4.85 13.68 5.12 13.72 5.39 13.72 5.66 13.70 5.94 13.64 6.21 13.54 6.49 13.38 6.75 13.05 7.00 13.38 7.25 13.54 7.51 13.64 7.79 13.70 8.06 13.72 8.34 13.72 8.61 13.68 8.88 13.61 9.15 13.51 9.40 13.38 9.64 13.23 9.87 13.04 10.08 12.83 10.27 12.59 10.43 12.31 10.55 11.89 10.56 12.02 10.95 11.99 11.26 11.91 11.54 11.79 11.79 11.65 12.03 11.49 12.25 11.30 12.45 11.09 12.62 10.86 12.77 10.61 12.89 10.35 12.98 10.08 13.04 9.80 13.07 9.51 13.06 9.21 12.99 8.87 12.75 8.73 13.15 8.53 13.37 8.30 13.55 8.06 13.70 7.81 13.81 7.54 13.89 7.27 13.93 7.00 13.95 6.73 13.93 6.46 13.89 6.19 13.81 5.94 13.70 5.70 13.55 5.47 13.37 5.27 13.15 5.13 12.75 4.79 12.99 4.49 13.06 4.20 13.07 3.92 13.04 3.65 12.98 3.39 12.89 3.14 12.77 2.91 12.62 2.70 12.45 2.51 12.25 2.35 12.03 2.21 11.79 2.09 11.54 2.01 11.26 1.98 10.95 2.11 10.56 1.69 10.55 1.41 10.43 1.17 10.27 0.96 10.08 0.77 9.87 0.62 9.64 0.49 9.40 0.39 9.15 0.32 8.88 0.28 8.61 0.28 8.34 0.30 8.06 0.36 7.79 0.46 7.51 0.62 7.25 0.95 7.00 0.62 6.75 0.46 6.49 0.36 6.21 0.30 5.94 0.28 5.66 0.28 5.39 0.32 5.12 0.39 4.85 0.49 4.60 0.62 4.36 0.77 4.13 0.96 3.92 1.17 3.73 1.41 3.57 1.69 3.45 2.11 3.44 1.98 3.05 2.01 2.74 2.09 2.46 2.21 2.21 2.35 1.97 2.51 1.75 2.70 1.55 2.91 1.38 3.14 1.23 3.39 1.11 3.65 1.02 3.92 0.96 4.20 0.93 4.49 0.94 4.79 1.01 5.13 1.25 5.27 0.85 5.47 0.63 5.70 0.45 5.94 0.30 6.19 0.19 6.46 0.11 6.73 0.07Z" fill="#fff"/><path d="M8.5 5.1Q8 4.3 7 4.3 5.6 4.3 5.6 5.4 5.6 6.3 7 6.8 8.5 7.3 8.5 8.5 8.5 9.7 7 9.7 5.9 9.7 5.4 8.9M7 3.3V4.3M7 9.7V10.7" stroke="#5f9e12" stroke-width="1.05" fill="none"/></svg>
<div class="t" style="left:848px;top:628px;height:24px;line-height:24px;font-size:11.8px;color:#fff;-webkit-text-stroke:0.35px #fff">费用报销</div>
<div class="vl" style="left:355px;top:623px;height:34px"></div>
<div class="vl" style="left:517px;top:623px;height:34px;background:#d3d3d3"></div>
<div class="vl" style="left:753px;top:623px;height:34px;background:#e8e8e8"></div>
<div class="vl" style="left:817px;top:623px;height:34px;background:#e8e8e8"></div>
<div class="hl" style="left:261px;top:657px;width:726px"></div>
<div class="cell idx" style="left:293px;top:658px;width:10px;height:34px;line-height:34px;text-align:left">2</div>
<div class="cell code" style="left:364px;top:658px;height:34px;line-height:34px">XM202409110001</div>
<div class="cell nm" style="left:526px;top:658px;height:34px;line-height:34px">铁路信息化管理方案咨询</div>
<div class="cell code" style="left:754px;top:658px;width:63px;height:34px;line-height:34px;padding-left:8.5px;letter-spacing:1.05px">2024-09</div>
<div class="btn" style="left:822px;top:663px;width:78px;background:#74aa25"></div>
<svg style="left:828px;top:668px;width:14px;height:14px" viewBox="0 0 14 14"><path d="M7.00 0.05 7.27 0.07 7.54 0.11 7.81 0.19 8.06 0.30 8.30 0.45 8.53 0.63 8.73 0.85 8.87 1.25 9.21 1.01 9.51 0.94 9.80 0.93 10.08 0.96 10.35 1.02 10.61 1.11 10.86 1.23 11.09 1.38 11.30 1.55 11.49 1.75 11.65 1.97 11.79 2.21 11.91 2.46 11.99 2.74 12.02 3.05 11.89 3.44 12.31 3.45 12.59 3.57 12.83 3.73 13.04 3.92 13.23 4.13 13.38 4.36 13.51 4.60 13.61 4.85 13.68 5.12 13.72 5.39 13.72 5.66 13.70 5.94 13.64 6.21 13.54 6.49 13.38 6.75 13.05 7.00 13.38 7.25 13.54 7.51 13.64 7.79 13.70 8.06 13.72 8.34 13.72 8.61 13.68 8.88 13.61 9.15 13.51 9.40 13.38 9.64 13.23 9.87 13.04 10.08 12.83 10.27 12.59 10.43 12.31 10.55 11.89 10.56 12.02 10.95 11.99 11.26 11.91 11.54 11.79 11.79 11.65 12.03 11.49 12.25 11.30 12.45 11.09 12.62 10.86 12.77 10.61 12.89 10.35 12.98 10.08 13.04 9.80 13.07 9.51 13.06 9.21 12.99 8.87 12.75 8.73 13.15 8.53 13.37 8.30 13.55 8.06 13.70 7.81 13.81 7.54 13.89 7.27 13.93 7.00 13.95 6.73 13.93 6.46 13.89 6.19 13.81 5.94 13.70 5.70 13.55 5.47 13.37 5.27 13.15 5.13 12.75 4.79 12.99 4.49 13.06 4.20 13.07 3.92 13.04 3.65 12.98 3.39 12.89 3.14 12.77 2.91 12.62 2.70 12.45 2.51 12.25 2.35 12.03 2.21 11.79 2.09 11.54 2.01 11.26 1.98 10.95 2.11 10.56 1.69 10.55 1.41 10.43 1.17 10.27 0.96 10.08 0.77 9.87 0.62 9.64 0.49 9.40 0.39 9.15 0.32 8.88 0.28 8.61 0.28 8.34 0.30 8.06 0.36 7.79 0.46 7.51 0.62 7.25 0.95 7.00 0.62 6.75 0.46 6.49 0.36 6.21 0.30 5.94 0.28 5.66 0.28 5.39 0.32 5.12 0.39 4.85 0.49 4.60 0.62 4.36 0.77 4.13 0.96 3.92 1.17 3.73 1.41 3.57 1.69 3.45 2.11 3.44 1.98 3.05 2.01 2.74 2.09 2.46 2.21 2.21 2.35 1.97 2.51 1.75 2.70 1.55 2.91 1.38 3.14 1.23 3.39 1.11 3.65 1.02 3.92 0.96 4.20 0.93 4.49 0.94 4.79 1.01 5.13 1.25 5.27 0.85 5.47 0.63 5.70 0.45 5.94 0.30 6.19 0.19 6.46 0.11 6.73 0.07Z" fill="#fff"/><path d="M8.5 5.1Q8 4.3 7 4.3 5.6 4.3 5.6 5.4 5.6 6.3 7 6.8 8.5 7.3 8.5 8.5 8.5 9.7 7 9.7 5.9 9.7 5.4 8.9M7 3.3V4.3M7 9.7V10.7" stroke="#5f9e12" stroke-width="1.05" fill="none"/></svg>
<div class="t" style="left:848px;top:663px;height:24px;line-height:24px;font-size:11.8px;color:#fff;-webkit-text-stroke:0.35px #fff">费用报销</div>
<div class="vl" style="left:355px;top:658px;height:34px"></div>
<div class="vl" style="left:517px;top:658px;height:34px;background:#d3d3d3"></div>
<div class="vl" style="left:753px;top:658px;height:34px;background:#e8e8e8"></div>
<div class="vl" style="left:817px;top:658px;height:34px;background:#e8e8e8"></div>
<div class="hl" style="left:261px;top:692px;width:726px"></div>
<div class="cell idx" style="left:293px;top:693px;width:10px;height:34px;line-height:34px;text-align:left">3</div>
<div class="cell code" style="left:364px;top:693px;height:34px;line-height:34px">XM202409180011</div>
<div class="cell nm" style="left:526px;top:693px;height:34px;line-height:34px">工厂管理系统开发项目</div>
<div class="cell code" style="left:754px;top:693px;width:63px;height:34px;line-height:34px;padding-left:8.5px;letter-spacing:1.05px">2024-11</div>
<div class="btn" style="left:822px;top:698px;width:78px;background:#74aa25"></div>
<svg style="left:828px;top:703px;width:14px;height:14px" viewBox="0 0 14 14"><path d="M7.00 0.05 7.27 0.07 7.54 0.11 7.81 0.19 8.06 0.30 8.30 0.45 8.53 0.63 8.73 0.85 8.87 1.25 9.21 1.01 9.51 0.94 9.80 0.93 10.08 0.96 10.35 1.02 10.61 1.11 10.86 1.23 11.09 1.38 11.30 1.55 11.49 1.75 11.65 1.97 11.79 2.21 11.91 2.46 11.99 2.74 12.02 3.05 11.89 3.44 12.31 3.45 12.59 3.57 12.83 3.73 13.04 3.92 13.23 4.13 13.38 4.36 13.51 4.60 13.61 4.85 13.68 5.12 13.72 5.39 13.72 5.66 13.70 5.94 13.64 6.21 13.54 6.49 13.38 6.75 13.05 7.00 13.38 7.25 13.54 7.51 13.64 7.79 13.70 8.06 13.72 8.34 13.72 8.61 13.68 8.88 13.61 9.15 13.51 9.40 13.38 9.64 13.23 9.87 13.04 10.08 12.83 10.27 12.59 10.43 12.31 10.55 11.89 10.56 12.02 10.95 11.99 11.26 11.91 11.54 11.79 11.79 11.65 12.03 11.49 12.25 11.30 12.45 11.09 12.62 10.86 12.77 10.61 12.89 10.35 12.98 10.08 13.04 9.80 13.07 9.51 13.06 9.21 12.99 8.87 12.75 8.73 13.15 8.53 13.37 8.30 13.55 8.06 13.70 7.81 13.81 7.54 13.89 7.27 13.93 7.00 13.95 6.73 13.93 6.46 13.89 6.19 13.81 5.94 13.70 5.70 13.55 5.47 13.37 5.27 13.15 5.13 12.75 4.79 12.99 4.49 13.06 4.20 13.07 3.92 13.04 3.65 12.98 3.39 12.89 3.14 12.77 2.91 12.62 2.70 12.45 2.51 12.25 2.35 12.03 2.21 11.79 2.09 11.54 2.01 11.26 1.98 10.95 2.11 10.56 1.69 10.55 1.41 10.43 1.17 10.27 0.96 10.08 0.77 9.87 0.62 9.64 0.49 9.40 0.39 9.15 0.32 8.88 0.28 8.61 0.28 8.34 0.30 8.06 0.36 7.79 0.46 7.51 0.62 7.25 0.95 7.00 0.62 6.75 0.46 6.49 0.36 6.21 0.30 5.94 0.28 5.66 0.28 5.39 0.32 5.12 0.39 4.85 0.49 4.60 0.62 4.36 0.77 4.13 0.96 3.92 1.17 3.73 1.41 3.57 1.69 3.45 2.11 3.44 1.98 3.05 2.01 2.74 2.09 2.46 2.21 2.21 2.35 1.97 2.51 1.75 2.70 1.55 2.91 1.38 3.14 1.23 3.39 1.11 3.65 1.02 3.92 0.96 4.20 0.93 4.49 0.94 4.79 1.01 5.13 1.25 5.27 0.85 5.47 0.63 5.70 0.45 5.94 0.30 6.19 0.19 6.46 0.11 6.73 0.07Z" fill="#fff"/><path d="M8.5 5.1Q8 4.3 7 4.3 5.6 4.3 5.6 5.4 5.6 6.3 7 6.8 8.5 7.3 8.5 8.5 8.5 9.7 7 9.7 5.9 9.7 5.4 8.9M7 3.3V4.3M7 9.7V10.7" stroke="#5f9e12" stroke-width="1.05" fill="none"/></svg>
<div class="t" style="left:848px;top:698px;height:24px;line-height:24px;font-size:11.8px;color:#fff;-webkit-text-stroke:0.35px #fff">费用报销</div>
<div class="vl" style="left:355px;top:693px;height:34px"></div>
<div class="vl" style="left:517px;top:693px;height:34px;background:#d3d3d3"></div>
<div class="vl" style="left:753px;top:693px;height:34px;background:#e8e8e8"></div>
<div class="vl" style="left:817px;top:693px;height:34px;background:#e8e8e8"></div>
<div class="hl" style="left:261px;top:727px;width:726px"></div>
<div class="cell idx" style="left:293px;top:728px;width:10px;height:34px;line-height:34px;text-align:left">4</div>
<div class="cell code" style="left:364px;top:728px;height:34px;line-height:34px">XM202410100003</div>
<div class="cell nm" style="left:526px;top:728px;height:34px;line-height:34px">万科数字化建设</div>
<div class="cell code" style="left:754px;top:728px;width:63px;height:34px;line-height:34px;padding-left:8.5px;letter-spacing:1.05px">2024-11</div>
<div class="btn" style="left:822px;top:733px;width:78px;background:#74aa25"></div>
<svg style="left:828px;top:738px;width:14px;height:14px" viewBox="0 0 14 14"><path d="M7.00 0.05 7.27 0.07 7.54 0.11 7.81 0.19 8.06 0.30 8.30 0.45 8.53 0.63 8.73 0.85 8.87 1.25 9.21 1.01 9.51 0.94 9.80 0.93 10.08 0.96 10.35 1.02 10.61 1.11 10.86 1.23 11.09 1.38 11.30 1.55 11.49 1.75 11.65 1.97 11.79 2.21 11.91 2.46 11.99 2.74 12.02 3.05 11.89 3.44 12.31 3.45 12.59 3.57 12.83 3.73 13.04 3.92 13.23 4.13 13.38 4.36 13.51 4.60 13.61 4.85 13.68 5.12 13.72 5.39 13.72 5.66 13.70 5.94 13.64 6.21 13.54 6.49 13.38 6.75 13.05 7.00 13.38 7.25 13.54 7.51 13.64 7.79 13.70 8.06 13.72 8.34 13.72 8.61 13.68 8.88 13.61 9.15 13.51 9.40 13.38 9.64 13.23 9.87 13.04 10.08 12.83 10.27 12.59 10.43 12.31 10.55 11.89 10.56 12.02 10.95 11.99 11.26 11.91 11.54 11.79 11.79 11.65 12.03 11.49 12.25 11.30 12.45 11.09 12.62 10.86 12.77 10.61 12.89 10.35 12.98 10.08 13.04 9.80 13.07 9.51 13.06 9.21 12.99 8.87 12.75 8.73 13.15 8.53 13.37 8.30 13.55 8.06 13.70 7.81 13.81 7.54 13.89 7.27 13.93 7.00 13.95 6.73 13.93 6.46 13.89 6.19 13.81 5.94 13.70 5.70 13.55 5.47 13.37 5.27 13.15 5.13 12.75 4.79 12.99 4.49 13.06 4.20 13.07 3.92 13.04 3.65 12.98 3.39 12.89 3.14 12.77 2.91 12.62 2.70 12.45 2.51 12.25 2.35 12.03 2.21 11.79 2.09 11.54 2.01 11.26 1.98 10.95 2.11 10.56 1.69 10.55 1.41 10.43 1.17 10.27 0.96 10.08 0.77 9.87 0.62 9.64 0.49 9.40 0.39 9.15 0.32 8.88 0.28 8.61 0.28 8.34 0.30 8.06 0.36 7.79 0.46 7.51 0.62 7.25 0.95 7.00 0.62 6.75 0.46 6.49 0.36 6.21 0.30 5.94 0.28 5.66 0.28 5.39 0.32 5.12 0.39 4.85 0.49 4.60 0.62 4.36 0.77 4.13 0.96 3.92 1.17 3.73 1.41 3.57 1.69 3.45 2.11 3.44 1.98 3.05 2.01 2.74 2.09 2.46 2.21 2.21 2.35 1.97 2.51 1.75 2.70 1.55 2.91 1.38 3.14 1.23 3.39 1.11 3.65 1.02 3.92 0.96 4.20 0.93 4.49 0.94 4.79 1.01 5.13 1.25 5.27 0.85 5.47 0.63 5.70 0.45 5.94 0.30 6.19 0.19 6.46 0.11 6.73 0.07Z" fill="#fff"/><path d="M8.5 5.1Q8 4.3 7 4.3 5.6 4.3 5.6 5.4 5.6 6.3 7 6.8 8.5 7.3 8.5 8.5 8.5 9.7 7 9.7 5.9 9.7 5.4 8.9M7 3.3V4.3M7 9.7V10.7" stroke="#5f9e12" stroke-width="1.05" fill="none"/></svg>
<div class="t" style="left:848px;top:733px;height:24px;line-height:24px;font-size:11.8px;color:#fff;-webkit-text-stroke:0.35px #fff">费用报销</div>
<div class="vl" style="left:355px;top:728px;height:34px"></div>
<div class="vl" style="left:517px;top:728px;height:34px;background:#d3d3d3"></div>
<div class="vl" style="left:753px;top:728px;height:34px;background:#e8e8e8"></div>
<div class="vl" style="left:817px;top:728px;height:34px;background:#e8e8e8"></div>
<div class="hl" style="left:261px;top:762px;width:726px"></div>
</div></div>
<div class="hl" style="left:261px;top:747px;width:726px"></div>
<div class="vl" style="left:355px;top:748px;height:39px;background:#e8e8e8"></div>
<div class="vl" style="left:517px;top:748px;height:39px;background:#d3d3d3"></div>
<div class="vl" style="left:753px;top:748px;height:39px;background:#e8e8e8"></div>
<div class="vl" style="left:817px;top:748px;height:39px;background:#e8e8e8"></div>
<div class="t" style="left:293px;top:752px;height:31px;line-height:31px;font-size:12.5px;color:#8c8c8c">12条</div>
<div class="a" style="left:983px;top:191px;width:4px;height:532px;background:#8a8a8a"></div>
<div class="a" style="left:518px;top:742.7px;width:21px;height:4.5px;background:#8a8a8a"></div>
</div></body></html>
